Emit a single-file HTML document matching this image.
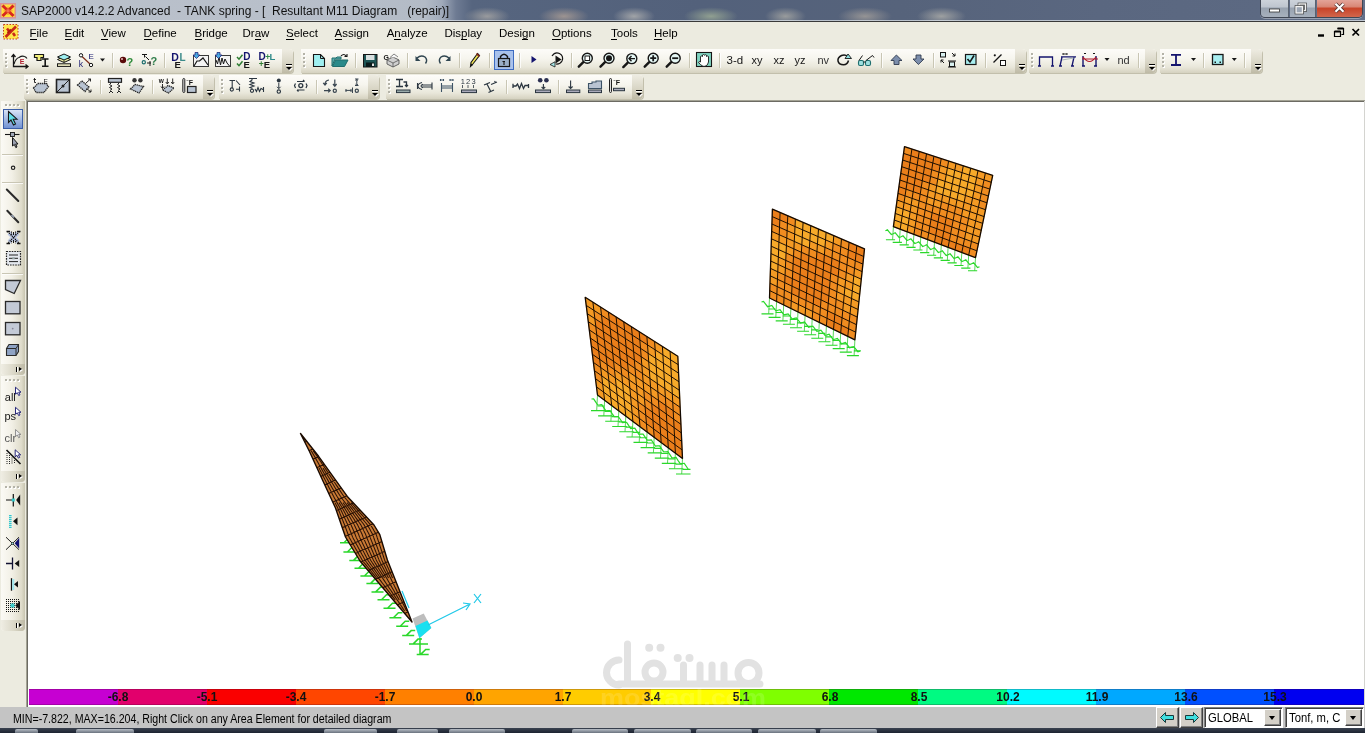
<!DOCTYPE html><html><head><meta charset="utf-8"><style>
*{margin:0;padding:0;box-sizing:border-box}
html,body{width:1365px;height:733px;overflow:hidden;will-change:transform;background:#ECEBE0;font-family:"Liberation Sans",sans-serif;position:relative}
.a{position:absolute}
.t{position:absolute;white-space:nowrap;line-height:1}
svg{position:absolute;overflow:visible}
.tb{position:absolute;border-radius:0 4px 4px 0;background:linear-gradient(#FDFCF9 0%,#F6F5EE 40%,#E9E7DA 75%,#D5D2C0 100%);box-shadow:1px 1px 0 #C2BFAC}
.m{position:absolute;font-size:11.5px;color:#000;line-height:1;white-space:nowrap}
.m u{text-decoration:none;border-bottom:1px solid #000}
</style></head><body>
<div class="a" style="left:0;top:0;width:1365px;height:21px;background:linear-gradient(90deg,#BAC1CB 0px,#B8BFCA 300px,#B3BBC6 425px,#A0AABA 442px,#6E7B93 456px,#56657F 472px,#53617B 700px,#56637B 900px,#5A6780 1100px,#5C6982 1260px,#64708A 1365px)"></div>
<div class="a" style="left:460px;top:2px;width:54px;height:19px;background:radial-gradient(ellipse 23.0px 9px at 50% 75%,rgba(170,168,165,0.8),rgba(170,168,165,0) 100%)"></div>
<div class="a" style="left:535px;top:2px;width:58px;height:19px;background:radial-gradient(ellipse 25.0px 9px at 50% 75%,rgba(175,160,150,0.8),rgba(175,160,150,0) 100%)"></div>
<div class="a" style="left:609px;top:2px;width:50px;height:19px;background:radial-gradient(ellipse 21.0px 9px at 50% 75%,rgba(180,180,178,0.8),rgba(180,180,178,0) 100%)"></div>
<div class="a" style="left:680px;top:2px;width:62px;height:19px;background:radial-gradient(ellipse 27.0px 9px at 50% 75%,rgba(160,175,150,0.8),rgba(160,175,150,0) 100%)"></div>
<div class="a" style="left:761px;top:2px;width:49px;height:19px;background:radial-gradient(ellipse 20.5px 9px at 50% 75%,rgba(170,170,165,0.8),rgba(170,170,165,0) 100%)"></div>
<div class="a" style="left:834px;top:2px;width:62px;height:19px;background:radial-gradient(ellipse 27.0px 9px at 50% 75%,rgba(165,160,155,0.8),rgba(165,160,155,0) 100%)"></div>
<div class="a" style="left:913px;top:2px;width:57px;height:19px;background:radial-gradient(ellipse 24.5px 9px at 50% 75%,rgba(175,175,170,0.8),rgba(175,175,170,0) 100%)"></div>
<div class="a" style="left:0;top:20px;width:1365px;height:1px;background:rgba(230,235,240,0.7)"></div>
<div class="a" style="left:0;top:21px;width:1365px;height:1px;background:#3A3A3A"></div>
<div class="t" style="left:21px;top:5px;font-size:12px;color:#111">SAP2000 v14.2.2 Advanced&nbsp; - TANK spring - [&nbsp; Resultant M11 Diagram &nbsp; (repair)]</div>
<div class="a" style="left:1260px;top:-3px;width:103px;height:21px;border-radius:0 0 5px 5px;border:1px solid #3F4654;border-top:none;overflow:hidden;box-shadow:0 1px 0 rgba(255,255,255,0.35)">
<div class="a" style="left:0;top:0;width:28px;height:21px;background:linear-gradient(#D3D8DF 0%,#BEC5CF 48%,#98A2B0 52%,#A9B2BE 100%);border-right:1px solid #5A6270"></div>
<div class="a" style="left:29px;top:0;width:26px;height:21px;background:linear-gradient(#D3D8DF 0%,#BEC5CF 48%,#98A2B0 52%,#A9B2BE 100%);border-right:1px solid #5A6270"></div>
<div class="a" style="left:56px;top:0;width:47px;height:21px;background:linear-gradient(#E8B0A8 0%,#D98878 45%,#C8442A 55%,#D26A50 100%)"></div>
</div>
<svg width="110" height="22" style="left:1260px;top:0">
<rect x="9.5" y="9" width="10" height="3" fill="#fff" stroke="#333" stroke-width="0.8"/>
<rect x="39" y="4" width="6.5" height="6.5" fill="none" stroke="#333" stroke-width="2.6"/><rect x="39" y="4" width="6.5" height="6.5" fill="none" stroke="#F2F2F2" stroke-width="1.4"/>
<rect x="36" y="6.5" width="6.5" height="6.5" fill="#9CA6B4" stroke="#333" stroke-width="2.6"/><rect x="36" y="6.5" width="6.5" height="6.5" fill="#9CA6B4" stroke="#F2F2F2" stroke-width="1.4"/>
<path d="M75.5 3.8L83.5 11.8M83.5 3.8L75.5 11.8" stroke="#4A2A2A" stroke-width="3.6"/><path d="M75.5 3.8L83.5 11.8M83.5 3.8L75.5 11.8" stroke="#fff" stroke-width="2.2"/>
</svg>
<svg width="60" height="20" style="left:1310px;top:24px">
<rect x="8" y="10.3" width="6" height="2.4" fill="#000"/>
<path d="M27.5 4.5H33.5V10.5H31.5M24.5 7.5H30.5V12.5H24.5Z" fill="none" stroke="#000" stroke-width="1.2"/><path d="M27.5 4.5H33.5M24.5 7.5H30.5" stroke="#000" stroke-width="2"/>
<path d="M42.5 5L49 11.5M49 5L42.5 11.5" stroke="#000" stroke-width="1.7"/>
</svg>
<div class="m" style="left:29.5px;top:28px"><u>F</u>ile</div>
<div class="m" style="left:64.5px;top:28px"><u>E</u>dit</div>
<div class="m" style="left:101px;top:28px"><u>V</u>iew</div>
<div class="m" style="left:143.5px;top:28px"><u>D</u>efine</div>
<div class="m" style="left:194.5px;top:28px"><u>B</u>ridge</div>
<div class="m" style="left:242.5px;top:28px">Dr<u>a</u>w</div>
<div class="m" style="left:286px;top:28px"><u>S</u>elect</div>
<div class="m" style="left:334.5px;top:28px"><u>A</u>ssign</div>
<div class="m" style="left:386.7px;top:28px">A<u>n</u>alyze</div>
<div class="m" style="left:444.4px;top:28px">Dis<u>p</u>lay</div>
<div class="m" style="left:499px;top:28px">Desi<u>g</u>n</div>
<div class="m" style="left:552px;top:28px"><u>O</u>ptions</div>
<div class="m" style="left:611px;top:28px"><u>T</u>ools</div>
<div class="m" style="left:654px;top:28px"><u>H</u>elp</div>
<svg width="30" height="45" style="left:0;top:0">
<rect x="0" y="3" width="16" height="15.5" fill="#F07070" opacity="0.55"/>
<rect x="1.5" y="4.5" width="13" height="12.5" fill="#FFE23A"/>
<path d="M2.5 5.5L13.5 16M13.5 5.5L2.5 16" stroke="#D8281E" stroke-width="3"/>
<path d="M8 6.5V15M3.5 10.8H12.5" stroke="#F06030" stroke-width="1.2" opacity="0.6"/>
<rect x="6.5" y="9.3" width="3" height="3" fill="#F47050"/>
<rect x="3.5" y="24.5" width="14.5" height="14.5" fill="#FFE84A" stroke="#C83A20" stroke-width="1" stroke-dasharray="1.5 1.5"/>
<path d="M5.5 37L16 26.5M7 28.5L9 31M13 33L15 36" stroke="#C82818" stroke-width="2.6"/>
<path d="M7.5 33L11 29.5" stroke="#B01810" stroke-width="2"/>
</svg>
<div class="tb" style="left:3px;top:49px;width:290px;height:24px"></div>
<div class="a" style="left:5px;top:53px;width:2px;height:2px;background:#B4B3A8;box-shadow:1px 1px 0 #fff"></div>
<div class="a" style="left:5px;top:57px;width:2px;height:2px;background:#B4B3A8;box-shadow:1px 1px 0 #fff"></div>
<div class="a" style="left:5px;top:61px;width:2px;height:2px;background:#B4B3A8;box-shadow:1px 1px 0 #fff"></div>
<div class="a" style="left:5px;top:65px;width:2px;height:2px;background:#B4B3A8;box-shadow:1px 1px 0 #fff"></div>
<div class="a" style="left:282px;top:49px;width:11px;height:24px;border-radius:0 4px 4px 0;background:linear-gradient(#EEECE2 0%,#D9D6C6 55%,#BEBAA6 100%)"></div>
<div class="a" style="left:285.5px;top:64px;width:6px;height:1px;background:#000;box-shadow:0 1px 0 #fff"></div>
<div class="a" style="left:285.5px;top:67px;width:0;height:0;border-left:3px solid transparent;border-right:3px solid transparent;border-top:3.5px solid #000;filter:drop-shadow(1px 1px 0 #fff)"></div>
<div class="tb" style="left:301px;top:49px;width:725px;height:24px"></div>
<div class="a" style="left:303px;top:53px;width:2px;height:2px;background:#B4B3A8;box-shadow:1px 1px 0 #fff"></div>
<div class="a" style="left:303px;top:57px;width:2px;height:2px;background:#B4B3A8;box-shadow:1px 1px 0 #fff"></div>
<div class="a" style="left:303px;top:61px;width:2px;height:2px;background:#B4B3A8;box-shadow:1px 1px 0 #fff"></div>
<div class="a" style="left:303px;top:65px;width:2px;height:2px;background:#B4B3A8;box-shadow:1px 1px 0 #fff"></div>
<div class="a" style="left:1015px;top:49px;width:11px;height:24px;border-radius:0 4px 4px 0;background:linear-gradient(#EEECE2 0%,#D9D6C6 55%,#BEBAA6 100%)"></div>
<div class="a" style="left:1018.5px;top:64px;width:6px;height:1px;background:#000;box-shadow:0 1px 0 #fff"></div>
<div class="a" style="left:1018.5px;top:67px;width:0;height:0;border-left:3px solid transparent;border-right:3px solid transparent;border-top:3.5px solid #000;filter:drop-shadow(1px 1px 0 #fff)"></div>
<div class="tb" style="left:1029px;top:49px;width:127px;height:24px"></div>
<div class="a" style="left:1031px;top:53px;width:2px;height:2px;background:#B4B3A8;box-shadow:1px 1px 0 #fff"></div>
<div class="a" style="left:1031px;top:57px;width:2px;height:2px;background:#B4B3A8;box-shadow:1px 1px 0 #fff"></div>
<div class="a" style="left:1031px;top:61px;width:2px;height:2px;background:#B4B3A8;box-shadow:1px 1px 0 #fff"></div>
<div class="a" style="left:1031px;top:65px;width:2px;height:2px;background:#B4B3A8;box-shadow:1px 1px 0 #fff"></div>
<div class="a" style="left:1145px;top:49px;width:11px;height:24px;border-radius:0 4px 4px 0;background:linear-gradient(#EEECE2 0%,#D9D6C6 55%,#BEBAA6 100%)"></div>
<div class="a" style="left:1148.5px;top:64px;width:6px;height:1px;background:#000;box-shadow:0 1px 0 #fff"></div>
<div class="a" style="left:1148.5px;top:67px;width:0;height:0;border-left:3px solid transparent;border-right:3px solid transparent;border-top:3.5px solid #000;filter:drop-shadow(1px 1px 0 #fff)"></div>
<div class="tb" style="left:1160px;top:49px;width:102px;height:24px"></div>
<div class="a" style="left:1162px;top:53px;width:2px;height:2px;background:#B4B3A8;box-shadow:1px 1px 0 #fff"></div>
<div class="a" style="left:1162px;top:57px;width:2px;height:2px;background:#B4B3A8;box-shadow:1px 1px 0 #fff"></div>
<div class="a" style="left:1162px;top:61px;width:2px;height:2px;background:#B4B3A8;box-shadow:1px 1px 0 #fff"></div>
<div class="a" style="left:1162px;top:65px;width:2px;height:2px;background:#B4B3A8;box-shadow:1px 1px 0 #fff"></div>
<div class="a" style="left:1251px;top:49px;width:11px;height:24px;border-radius:0 4px 4px 0;background:linear-gradient(#EEECE2 0%,#D9D6C6 55%,#BEBAA6 100%)"></div>
<div class="a" style="left:1254.5px;top:64px;width:6px;height:1px;background:#000;box-shadow:0 1px 0 #fff"></div>
<div class="a" style="left:1254.5px;top:67px;width:0;height:0;border-left:3px solid transparent;border-right:3px solid transparent;border-top:3.5px solid #000;filter:drop-shadow(1px 1px 0 #fff)"></div>
<div class="tb" style="left:24px;top:75px;width:190px;height:24px"></div>
<div class="a" style="left:26px;top:79px;width:2px;height:2px;background:#B4B3A8;box-shadow:1px 1px 0 #fff"></div>
<div class="a" style="left:26px;top:83px;width:2px;height:2px;background:#B4B3A8;box-shadow:1px 1px 0 #fff"></div>
<div class="a" style="left:26px;top:87px;width:2px;height:2px;background:#B4B3A8;box-shadow:1px 1px 0 #fff"></div>
<div class="a" style="left:26px;top:91px;width:2px;height:2px;background:#B4B3A8;box-shadow:1px 1px 0 #fff"></div>
<div class="a" style="left:203px;top:75px;width:11px;height:24px;border-radius:0 4px 4px 0;background:linear-gradient(#EEECE2 0%,#D9D6C6 55%,#BEBAA6 100%)"></div>
<div class="a" style="left:206.5px;top:90px;width:6px;height:1px;background:#000;box-shadow:0 1px 0 #fff"></div>
<div class="a" style="left:206.5px;top:93px;width:0;height:0;border-left:3px solid transparent;border-right:3px solid transparent;border-top:3.5px solid #000;filter:drop-shadow(1px 1px 0 #fff)"></div>
<div class="tb" style="left:219px;top:75px;width:160px;height:24px"></div>
<div class="a" style="left:221px;top:79px;width:2px;height:2px;background:#B4B3A8;box-shadow:1px 1px 0 #fff"></div>
<div class="a" style="left:221px;top:83px;width:2px;height:2px;background:#B4B3A8;box-shadow:1px 1px 0 #fff"></div>
<div class="a" style="left:221px;top:87px;width:2px;height:2px;background:#B4B3A8;box-shadow:1px 1px 0 #fff"></div>
<div class="a" style="left:221px;top:91px;width:2px;height:2px;background:#B4B3A8;box-shadow:1px 1px 0 #fff"></div>
<div class="a" style="left:368px;top:75px;width:11px;height:24px;border-radius:0 4px 4px 0;background:linear-gradient(#EEECE2 0%,#D9D6C6 55%,#BEBAA6 100%)"></div>
<div class="a" style="left:371.5px;top:90px;width:6px;height:1px;background:#000;box-shadow:0 1px 0 #fff"></div>
<div class="a" style="left:371.5px;top:93px;width:0;height:0;border-left:3px solid transparent;border-right:3px solid transparent;border-top:3.5px solid #000;filter:drop-shadow(1px 1px 0 #fff)"></div>
<div class="tb" style="left:386px;top:75px;width:257px;height:24px"></div>
<div class="a" style="left:388px;top:79px;width:2px;height:2px;background:#B4B3A8;box-shadow:1px 1px 0 #fff"></div>
<div class="a" style="left:388px;top:83px;width:2px;height:2px;background:#B4B3A8;box-shadow:1px 1px 0 #fff"></div>
<div class="a" style="left:388px;top:87px;width:2px;height:2px;background:#B4B3A8;box-shadow:1px 1px 0 #fff"></div>
<div class="a" style="left:388px;top:91px;width:2px;height:2px;background:#B4B3A8;box-shadow:1px 1px 0 #fff"></div>
<div class="a" style="left:632px;top:75px;width:11px;height:24px;border-radius:0 4px 4px 0;background:linear-gradient(#EEECE2 0%,#D9D6C6 55%,#BEBAA6 100%)"></div>
<div class="a" style="left:635.5px;top:90px;width:6px;height:1px;background:#000;box-shadow:0 1px 0 #fff"></div>
<div class="a" style="left:635.5px;top:93px;width:0;height:0;border-left:3px solid transparent;border-right:3px solid transparent;border-top:3.5px solid #000;filter:drop-shadow(1px 1px 0 #fff)"></div>
<svg width="1365" height="110" style="left:0;top:0"><path d="M13.5 55V66.5H27.5M11.5 57L13.5 54.5L15.5 57M25.5 64.5L28 66.5L25.5 68.5" stroke="#161616" stroke-width="1.3" fill="none"/>
<path d="M14 64Q16 58 19 57.5Q22 55.5 24.5 56.5Q26 57 27 58.5" stroke="#161616" stroke-width="1.1" fill="none"/>
<text x="19.8" y="64.2" font-family='"Liberation Sans",sans-serif' font-size="7" fill="#B02030" font-weight="bold" >E</text>
<path d="M34.5 54.5H43.5V57.5H41V60.5H37V57.5H34.5Z" fill="#F4F07A" stroke="#161616" stroke-width="1.2"/>
<path d="M42 59H48.5M45.2 59V66M42 66.2H48.5" stroke="#161616" stroke-width="1.6" fill="none"/>
<path d="M57.5 59.5L64 56.5L70.5 59.5L64 62.5Z" fill="#E8E8A0" stroke="#161616" stroke-width="1"/>
<path d="M57.5 57L64 54L70.5 57L64 60Z" fill="#9FEFF0" stroke="#161616" stroke-width="1"/>
<path d="M64 60.5V62" stroke="#161616"/><rect x="57.5" y="63.8" width="13" height="2.6" fill="#F2F0C8" stroke="#161616" stroke-width="1"/>
<path d="M82 56.5L90 64" stroke="#7A2A1A" stroke-width="1.2"/><circle cx="81" cy="55.3" r="1.7" fill="#fff" stroke="#161616"/><circle cx="91" cy="65" r="1.7" fill="#fff" stroke="#161616"/>
<text x="88.6" y="58.9" font-family='"Liberation Sans",sans-serif' font-size="8" fill="#14146E" font-weight="normal" >E</text>
<text x="78.8" y="66.6" font-family='"Liberation Sans",sans-serif' font-size="8.5" fill="#14146E" font-weight="normal" >k</text>
<path d="M100 58.4h5l-2.5 3z" fill="#161616"/>
<path d="M112.5 53V68" stroke="#C9C6B4" stroke-width="1"/><path d="M113.5 53V68" stroke="#FFFFFF" stroke-width="1" opacity="0.8"/>
<circle cx="123" cy="60" r="3.2" fill="#5A0A0A"/><circle cx="122" cy="59" r="1" fill="#E8C0C0"/>
<text x="126.5" y="65.5" font-family='"Liberation Sans",sans-serif' font-size="11" fill="#2E8B3A" font-weight="bold" >?</text>
<path d="M142 54.5H147M144.5 54.5V57.5M145.5 56.5L149 60M147 63H151M150 61V66" stroke="#161616" stroke-width="1" fill="none"/><circle cx="143.8" cy="62.2" r="1.6" fill="none" stroke="#1E6E6E" stroke-width="1.2"/>
<text x="150.5" y="64.5" font-family='"Liberation Sans",sans-serif' font-size="11" fill="#2E7D4A" font-weight="bold" >?</text>
<path d="M164.5 53V68" stroke="#C9C6B4" stroke-width="1"/><path d="M165.5 53V68" stroke="#FFFFFF" stroke-width="1" opacity="0.8"/>
<text x="171.2" y="60.6" font-family='"Liberation Sans",sans-serif' font-size="10.5" fill="#14146E" font-weight="bold" >D</text>
<text x="179.6" y="60.6" font-family='"Liberation Sans",sans-serif' font-size="10" fill="#3A8A8A" font-weight="bold" >L</text>
<text x="174.6" y="67.6" font-family='"Liberation Sans",sans-serif' font-size="9.5" fill="#161616" font-weight="bold" >E</text>
<rect x="193.5" y="55.5" width="15" height="11" fill="#F4F4F4" stroke="#3A3A3A" stroke-width="1"/>
<path d="M194 66L197 61H199.5L203 58L208 65" stroke="#161616" stroke-width="1.2" fill="none"/>
<path d="M195 52.5H198V55H200L196.5 58.5L193 55H195Z" fill="#4AA8E0" stroke="#14146E" stroke-width="0.7"/>
<rect x="215.5" y="55.5" width="15" height="11" fill="#F4F4F4" stroke="#3A3A3A" stroke-width="1"/>
<path d="M216 60L217.5 64L219 57L220.5 65L222 58L223.5 64L225 59L227 63L229.5 66" stroke="#161616" stroke-width="1" fill="none"/>
<path d="M217 52.5H220V55H222L218.5 58.5L215 55H217Z" fill="#4AA8E0" stroke="#14146E" stroke-width="0.7"/>
<path d="M237 57L239 59.2L242.5 54.8M237 63.5L239 65.7L242.5 61.3" stroke="#2E7D32" stroke-width="1.5" fill="none"/>
<text x="243.3" y="60.4" font-family='"Liberation Sans",sans-serif' font-size="10" fill="#14146E" font-weight="bold" >D</text>
<text x="243.5" y="67.6" font-family='"Liberation Sans",sans-serif' font-size="9.5" fill="#161616" font-weight="bold" >E</text>
<text x="258.6" y="60.4" font-family='"Liberation Sans",sans-serif' font-size="10" fill="#14146E" font-weight="bold" >D</text>
<text x="265.3" y="60.4" font-family='"Liberation Sans",sans-serif' font-size="8.5" fill="#2E8A4A" font-weight="bold" >+</text>
<text x="269.5" y="60.4" font-family='"Liberation Sans",sans-serif' font-size="9.5" fill="#2E8A8A" font-weight="bold" >L</text>
<text x="258.8" y="66.8" font-family='"Liberation Sans",sans-serif' font-size="8.5" fill="#2E7D32" font-weight="bold" >+</text>
<text x="263.8" y="67.6" font-family='"Liberation Sans",sans-serif' font-size="9.5" fill="#161616" font-weight="bold" >E</text><path d="M313.5 54.5H320.5L324.5 58.5V66.5H313.5Z" fill="#9FEFF0" stroke="#161616" stroke-width="1.1"/><path d="M320.5 54.5V58.5H324.5" fill="none" stroke="#161616"/>
<path d="M332 58H336L337 57H341V59H335L332 66Z" fill="#5FB0B0" stroke="#1E6E6E" stroke-width="1"/><path d="M332.5 66.5L335.5 60H348L344.5 66.5Z" fill="#2A8A8A" stroke="#1E6E6E" stroke-width="1"/>
<path d="M341 56Q344 53 346 56M344.5 56.5H347V54" stroke="#161616" stroke-width="1.1" fill="none"/>
<path d="M355.5 53V68" stroke="#C9C6B4" stroke-width="1"/><path d="M356.5 53V68" stroke="#FFFFFF" stroke-width="1" opacity="0.8"/>
<rect x="363.5" y="54.5" width="13.5" height="12.5" fill="#1E5555" stroke="#161616" stroke-width="1"/><rect x="366" y="55" width="8.5" height="5" fill="#D8E0E0"/><rect x="366" y="62.5" width="8.5" height="4.5" fill="#0A1A1A"/><rect x="372" y="63.5" width="2" height="2.5" fill="#E0E0E0"/>
<text x="383.5" y="59.5" font-family='"Liberation Sans",sans-serif' font-size="7" fill="#161616" font-weight="bold" >G</text>
<path d="M387 60L393 57L399 60L399 64L393 67L387 64Z" fill="#D0D0D0" stroke="#555" stroke-width="0.9"/><path d="M387 60L393 63L399 60M393 63V67" stroke="#555" stroke-width="0.8" fill="none"/><path d="M390 57.5L394 54L398 57" fill="#F8F8F8" stroke="#666" stroke-width="0.8"/>
<path d="M407.5 53V68" stroke="#C9C6B4" stroke-width="1"/><path d="M408.5 53V68" stroke="#FFFFFF" stroke-width="1" opacity="0.8"/>
<path d="M417 58Q421 54.5 425 57Q428 60 425.5 63.5" stroke="#2F4550" stroke-width="1.4" fill="none"/><path d="M415.5 56V61H420.5Z" fill="#2F4550"/>
<path d="M449 58Q445 54.5 441 57Q438 60 440.5 63.5" stroke="#2F4550" stroke-width="1.4" fill="none"/><path d="M450.5 56V61H445.5Z" fill="#2F4550"/>
<path d="M459.5 53V68" stroke="#C9C6B4" stroke-width="1"/><path d="M460.5 53V68" stroke="#FFFFFF" stroke-width="1" opacity="0.8"/>
<path d="M477.5 53.5L479.5 55.5L472.5 64.5L470.5 66.5L471 62.5Z" fill="#F4E85A" stroke="#161616" stroke-width="1.1"/><path d="M477 53L479.8 55.8L478.8 57L476 54.2Z" fill="#8A2A1A"/><path d="M470.3 66.8L471 63.5L473 65Z" fill="#161616"/>
<path d="M489.5 53V68" stroke="#C9C6B4" stroke-width="1"/><path d="M490.5 53V68" stroke="#FFFFFF" stroke-width="1" opacity="0.8"/>
<rect x="494.5" y="50.5" width="19" height="19" fill="#A9C2EC" stroke="#3D6BC0" stroke-width="1"/>
<path d="M500.5 58.5V56.5Q504 52 507.5 56.5V58.5" stroke="#161616" stroke-width="1.4" fill="none"/><rect x="498.5" y="58.5" width="11" height="8" fill="#9AAFC8" stroke="#161616" stroke-width="1.2"/><path d="M504 61V65M502.5 61.5H505" stroke="#161616" stroke-width="1.1"/>
<path d="M519.5 53V68" stroke="#C9C6B4" stroke-width="1"/><path d="M520.5 53V68" stroke="#FFFFFF" stroke-width="1" opacity="0.8"/>
<path d="M531.5 56L536.5 59.5L531.5 63Z" fill="#14146E"/>
<path d="M552 56Q555 51.5 559.5 53.5Q564 56 562 61Q560 64.5 556 64" stroke="#161616" stroke-width="1.2" fill="none"/><path d="M555.5 55.5L561.5 59.5L555.5 63.5Z" fill="#161616"/><path d="M550 64.5L555 61.8V67Z" fill="#A8E8E8" stroke="#161616" stroke-width="0.8"/>
<path d="M571.5 53V68" stroke="#C9C6B4" stroke-width="1"/><path d="M572.5 53V68" stroke="#FFFFFF" stroke-width="1" opacity="0.8"/>
<path d="M583.3 62.2L578.8 66.7" stroke="#161616" stroke-width="2.4" stroke-linecap="round"/><circle cx="587.3" cy="58.2" r="5" fill="#E6F8F6" stroke="#161616" stroke-width="1.4"/><rect x="585" y="56" width="4.6" height="4.5" fill="#fff" stroke="#161616" stroke-width="1"/>
<path d="M605 62.2L600.5 66.7" stroke="#161616" stroke-width="2.4" stroke-linecap="round"/><circle cx="609" cy="58.2" r="5" fill="#E6F8F6" stroke="#161616" stroke-width="1.4"/><circle cx="609" cy="58.2" r="3" fill="#161616"/>
<path d="M627.8 62.6L623.3 67.1" stroke="#161616" stroke-width="2.4" stroke-linecap="round"/><circle cx="631.8" cy="58.6" r="5" fill="#E6F8F6" stroke="#161616" stroke-width="1.4"/><path d="M635 58.6H629M631.5 56L629 58.6L631.5 61.2" stroke="#161616" stroke-width="1.4" fill="none"/>
<path d="M649.2 62.2L644.7 66.7" stroke="#161616" stroke-width="2.4" stroke-linecap="round"/><circle cx="653.2" cy="58.2" r="5" fill="#E6F8F6" stroke="#161616" stroke-width="1.4"/><path d="M650.2 58.2H656.2M653.2 55.2V61.2" stroke="#161616" stroke-width="1.8"/>
<path d="M671.2 62.2L666.7 66.7" stroke="#161616" stroke-width="2.4" stroke-linecap="round"/><circle cx="675.2" cy="58.2" r="5" fill="#E6F8F6" stroke="#161616" stroke-width="1.4"/><path d="M672.2 58.2H678.2" stroke="#161616" stroke-width="1.8"/>
<path d="M689.5 53V68" stroke="#C9C6B4" stroke-width="1"/><path d="M690.5 53V68" stroke="#FFFFFF" stroke-width="1" opacity="0.8"/>
<rect x="696.5" y="52.5" width="15" height="14" fill="#7FD3C0" stroke="#161616" stroke-width="1.1"/>
<path d="M700.5 62V56.5Q701.5 55.5 702.5 56.5V55Q703.5 54 704.5 55V55.2Q705.5 54.2 706.5 55.2V56.5Q707.5 55.5 708.5 56.5V62Q708 65.5 705 66.3H703Q700.5 65 698.5 62.5Q698.5 61 700.5 62Z" fill="#fff" stroke="#161616" stroke-width="0.9"/>
<path d="M719.5 53V68" stroke="#C9C6B4" stroke-width="1"/><path d="M720.5 53V68" stroke="#FFFFFF" stroke-width="1" opacity="0.8"/>
<text x="726.5" y="63.7" font-family='"Liberation Sans",sans-serif' font-size="11.5" fill="#161616" font-weight="normal" >3-d</text>
<text x="751.5" y="63.7" font-family='"Liberation Sans",sans-serif' font-size="11" fill="#161616" font-weight="normal" >xy</text>
<text x="773.5" y="63.7" font-family='"Liberation Sans",sans-serif' font-size="11" fill="#161616" font-weight="normal" >xz</text>
<text x="794.5" y="63.7" font-family='"Liberation Sans",sans-serif' font-size="11" fill="#161616" font-weight="normal" >yz</text>
<text x="817.5" y="63.7" font-family='"Liberation Sans",sans-serif' font-size="11" fill="#333" font-weight="normal" >nv</text>
<path d="M848 56.5Q845 54 841.5 55.5Q837.5 57.5 838 61Q839 64.8 843.5 64.8Q847.5 64.5 848.5 60.5" stroke="#161616" stroke-width="1.5" fill="none"/><path d="M845 58.5L848 54L851.5 58.5Z" fill="#8FE0E0" stroke="#161616" stroke-width="0.9"/>
<rect x="858.5" y="60.5" width="5" height="5" rx="1.5" fill="#9FE0E0" stroke="#1E6E6E" stroke-width="1.1"/><rect x="865.5" y="60.5" width="5" height="5" rx="1.5" fill="#9FE0E0" stroke="#1E6E6E" stroke-width="1.1"/><path d="M863.5 62H865.5M859 60.5L862.5 55.5M866 60.5L872.5 55.5L874 57.5" stroke="#161616" stroke-width="1" fill="none"/>
<path d="M881.5 53V68" stroke="#C9C6B4" stroke-width="1"/><path d="M882.5 53V68" stroke="#FFFFFF" stroke-width="1" opacity="0.8"/>
<path d="M896.4 55L902 60.5H899V64.5H894V60.5H891Z" fill="#7C8EAC" stroke="#2F3A4F" stroke-width="0.9"/>
<path d="M918.4 64.5L924 59H921V55H916V59H913Z" fill="#7C8EAC" stroke="#2F3A4F" stroke-width="0.9"/>
<path d="M933.5 53V68" stroke="#C9C6B4" stroke-width="1"/><path d="M934.5 53V68" stroke="#FFFFFF" stroke-width="1" opacity="0.8"/>
<rect x="940.5" y="52.5" width="5" height="4.5" fill="#D8F0F0" stroke="#161616" stroke-width="1"/><rect x="949.5" y="62" width="5" height="4.5" fill="#D8F0F0" stroke="#161616" stroke-width="1"/><path d="M952 53L955 56M955 53.5V56H952.5M944 63L941 60M941 62.5V60H943.5M948 61H956M948 67H956" stroke="#161616" stroke-width="1" fill="none"/>
<rect x="965.5" y="54.5" width="10.5" height="10" fill="#A8EEF0" stroke="#161616" stroke-width="1.2"/><path d="M967.5 59L970 62L974 55.5" stroke="#161616" stroke-width="1.6" fill="none"/>
<path d="M985.5 53V68" stroke="#C9C6B4" stroke-width="1"/><path d="M986.5 53V68" stroke="#FFFFFF" stroke-width="1" opacity="0.8"/>
<circle cx="994.8" cy="55.3" r="1.1" fill="#161616"/><path d="M993.5 62.5L1001.5 54.5" stroke="#161616" stroke-width="1.3"/><rect x="1000.5" y="60.5" width="5" height="5" fill="#fff" stroke="#161616" stroke-width="1"/><path d="M1039.5 66V57H1052.5V66M1038 66H1041M1051 66H1054" stroke="#14146E" stroke-width="1.3" fill="none"/>
<path d="M1061 56.8H1076M1062 57L1060 66M1074 57L1072 66M1059 66H1062M1071 66H1074" stroke="#14146E" stroke-width="1.3" fill="none"/><path d="M1063 53V55M1067 53V55M1063 54H1067" stroke="#161616" stroke-width="0.9"/><path d="M1062 60L1074 58" stroke="#9AA" stroke-width="0.8"/>
<path d="M1083 56V66M1096 56V66M1082 66H1085M1094 66H1097" stroke="#14146E" stroke-width="1.4" fill="none"/><path d="M1082 59H1098M1083 57Q1089.5 66 1096 57" stroke="#B01828" stroke-width="1.2" fill="none"/><path d="M1084 53.5H1086M1093 53.5H1095" stroke="#161616"/>
<path d="M1104.5 57.9h5l-2.5 3z" fill="#161616"/>
<text x="1117.5" y="63.8" font-family='"Liberation Sans",sans-serif' font-size="11" fill="#333" font-weight="normal" >nd</text>
<path d="M1138.5 53V68" stroke="#C9C6B4" stroke-width="1"/><path d="M1139.5 53V68" stroke="#FFFFFF" stroke-width="1" opacity="0.8"/>
<path d="M1171 54.8H1181M1176 54.8V65M1171 65H1181" stroke="#14146E" stroke-width="1.8" fill="none"/>
<path d="M1191 57.9h5l-2.5 3z" fill="#161616"/>
<path d="M1203.5 53V68" stroke="#C9C6B4" stroke-width="1"/><path d="M1204.5 53V68" stroke="#FFFFFF" stroke-width="1" opacity="0.8"/>
<rect x="1212.5" y="54.5" width="10.5" height="10" fill="#A8EEF0" stroke="#161616" stroke-width="1.3"/><rect x="1214.5" y="61.5" width="1.5" height="1.5" fill="#161616"/><rect x="1219.5" y="61.5" width="1.5" height="1.5" fill="#161616"/>
<path d="M1231.8 57.9h5l-2.5 3z" fill="#161616"/>
<path d="M1244.5 53V68" stroke="#C9C6B4" stroke-width="1"/><path d="M1245.5 53V68" stroke="#FFFFFF" stroke-width="1" opacity="0.8"/><path d="M33.5 88L38 83.5L46 83.5L48.5 86.5L44 92.5L36 92.5Z" fill="#B9C4D2" stroke="#222" stroke-width="1.3" stroke-dasharray="1.3 0.7"/>
<path d="M34.5 78V82.5H36M33.5 79.5H36" stroke="#161616" stroke-width="0.9" fill="none"/>
<text x="43.5" y="83.6" font-family='"Liberation Sans",sans-serif' font-size="6.5" fill="#161616" font-weight="normal" >E</text>
<rect x="56.5" y="79.5" width="13" height="13" fill="#B9C4D2" stroke="#222" stroke-width="1.6"/><path d="M57 92L69 80" stroke="#222" stroke-width="1"/><circle cx="63" cy="86" r="1.5" fill="#222"/>
<path d="M77.5 85L82 81L89 87L85 91.5Z" fill="#B9C4D2" stroke="#222" stroke-width="1.3" stroke-dasharray="1.3 0.7"/>
<path d="M86 83L90.5 79M88 79H90.5V81.5M86.5 88.5L91 92M91 89.5V92H88.5" stroke="#161616" stroke-width="0.9" fill="none"/>
<path d="M100.5 80V94" stroke="#C9C6B4" stroke-width="1"/><path d="M101.5 80V94" stroke="#FFFFFF" stroke-width="1" opacity="0.8"/>
<rect x="108.5" y="78.5" width="13" height="3.8" fill="#B9C4D2" stroke="#222" stroke-width="1.2"/><path d="M111 83L109.5 84.5L112 86L109.5 87.5L112 89L110 90.5M119 83L117.5 84.5L120 86L117.5 87.5L120 89L118 90.5M109 93L111 91L113 93M117 93L119 91L121 93" stroke="#222" stroke-width="1" fill="none"/>
<circle cx="134.5" cy="80.3" r="2.2" fill="#333"/><circle cx="140.4" cy="80.3" r="2.2" fill="#333"/>
<path d="M130.5 89L135 84.5L143.5 86.5L139 93Z" fill="#B9C4D2" stroke="#222" stroke-width="1.3" stroke-dasharray="1.3 0.7"/>
<path d="M152.5 80V94" stroke="#C9C6B4" stroke-width="1"/><path d="M153.5 80V94" stroke="#FFFFFF" stroke-width="1" opacity="0.8"/>
<text x="158.7" y="83" font-family='"Liberation Sans",sans-serif' font-size="6.5" fill="#161616" font-weight="bold" >w</text>
<path d="M167.3 78.5V83.5M165.8 82L167.3 84L168.8 82M172.7 78.5V83.5M171.2 82L172.7 84L174.2 82M162.5 84V88M161 86.5L162.5 88.5L164 86.5" stroke="#161616" stroke-width="0.9" fill="none"/>
<path d="M162.5 90L168 85.5L174 88L168.5 93Z" fill="#B9C4D2" stroke="#222" stroke-width="1.3" stroke-dasharray="1.3 0.7"/>
<rect x="182.8" y="78.5" width="2" height="14" rx="1" fill="#ddd" stroke="#222" stroke-width="1"/>
<text x="188.8" y="84.8" font-family='"Liberation Sans",sans-serif' font-size="7" fill="#161616" font-weight="bold" >F</text>
<path d="M186.5 80.5H188.5" stroke="#777" stroke-width="0.8"/><rect x="187.5" y="86.5" width="8.5" height="6" fill="#B9C4D2" stroke="#222" stroke-width="1.2"/>
<path d="M229.5 80.5H235M232.2 80.5V88M236 80.5L240 85M236 89.2H239M239.5 86.5V91.5" stroke="#2B3640" stroke-width="1.1" fill="none"/><circle cx="231.8" cy="89.5" r="1.6" fill="none" stroke="#2B3640" stroke-width="1.1"/>
<path d="M249 78.5H257M252 78.5V80L250 81.5L254 83L250 84.5L254 86L250 87.5L252.5 88.5M255 89L256.5 91.5L258 87.5L259.5 91.5L261 88.5L263 89.5M263.5 87V92" stroke="#2B3640" stroke-width="1.1" fill="none"/><circle cx="252" cy="90.8" r="1.6" fill="none" stroke="#2B3640" stroke-width="1.1"/>
<circle cx="278.8" cy="80.5" r="2" fill="#2B3640"/><path d="M278.8 83V88.5M277 86.8L278.8 88.6L280.6 86.8" stroke="#2B3640" stroke-width="1" fill="none"/><circle cx="278.8" cy="91.6" r="1.7" fill="none" stroke="#2B3640" stroke-width="1.1"/>
<circle cx="300.8" cy="85.6" r="2" fill="none" stroke="#2B3640" stroke-width="1.3"/><path d="M297 81.5H304.5M303 80L304.5 81.5M297 90H304.5M298.5 91.5L297 90M295.5 83.5L294.5 85.6L295.5 88M306 83.5L307 85.6L306 88" stroke="#2B3640" stroke-width="1.2" fill="none"/>
<path d="M316.5 80V94" stroke="#C9C6B4" stroke-width="1"/><path d="M317.5 80V94" stroke="#FFFFFF" stroke-width="1" opacity="0.8"/>
<path d="M329 80Q325 80.5 325 84.5M323.2 82.8L325 85L326.8 82.8M334.8 79.5V86M333 84L334.8 86.2L336.6 84M324 90.6H330M328.2 88.8L330.2 90.6L328.2 92.4" stroke="#3A4650" stroke-width="1.2" fill="none"/><circle cx="334.8" cy="90.8" r="1.6" fill="none" stroke="#3A4650" stroke-width="1.2"/>
<path d="M345.5 90.4H351.5M346 89V92M351 89V92M352.5 87.5V93M355 79H358.5M356.8 79V85.5M355 85.5H358.5M355.5 80.5L356.8 79.5L358 80.5M355.5 84.2L356.8 85.3L358 84.2" stroke="#3A4650" stroke-width="1" fill="none"/><circle cx="356.8" cy="90.8" r="1.6" fill="none" stroke="#3A4650" stroke-width="1.2"/>
<path d="M396 79.5H403M399.5 79.5V86.5M396 86.5H403M403.5 82H406.5V86M405 85L406.5 86.5L408 85" stroke="#2B3640" stroke-width="1.3" fill="none"/><rect x="396.5" y="90" width="13.5" height="2.6" fill="#9AA" stroke="#2B3640" stroke-width="1"/>
<path d="M422 82.5Q418 83.5 418 86Q418 88.5 422 89.5M423 84.2Q421 85 421 86Q421 87 423 87.8M421.5 85H432M421.5 87H432M432 82.5V89.5M417.5 83V89" stroke="#2B3640" stroke-width="1.1" fill="none"/>
<path d="M440.5 79V81M443.5 79V81M440.5 80H443.5M450 79V81M453 79V81M450 80H453M441.5 83V92M452.5 83V92M441.5 86H452.5M441.5 88H452.5" stroke="#3D5366" stroke-width="1.1" fill="none"/>
<text x="460.8" y="84" font-family='"Liberation Sans",sans-serif' font-size="7.5" fill="#2B3640" font-weight="normal" >1</text>
<text x="466" y="84" font-family='"Liberation Sans",sans-serif' font-size="7.5" fill="#2B3640" font-weight="normal" >2</text>
<text x="471.5" y="84" font-family='"Liberation Sans",sans-serif' font-size="7.5" fill="#2B3640" font-weight="normal" >3</text>
<path d="M462.5 85V88M468 85V88M473.5 85V88" stroke="#2B3640" stroke-width="0.8"/><rect x="461.5" y="90" width="15" height="2.6" fill="#AAB" stroke="#2B3640" stroke-width="1"/>
<path d="M484 85L490 82.5M487 84L490.5 91M488.5 92.5L494 90M491 84.5L497 82M494.5 81L496 83" stroke="#2B3640" stroke-width="1.2" fill="none"/>
<path d="M506.5 80V94" stroke="#C9C6B4" stroke-width="1"/><path d="M507.5 80V94" stroke="#FFFFFF" stroke-width="1" opacity="0.8"/>
<path d="M513 83.8V88M513 86H516L517.5 84L519.5 88.5L521.5 83.5L523.5 88.5L525 85.5H528.5M528.5 84V88" stroke="#2B3640" stroke-width="1.3" fill="none"/>
<circle cx="540.2" cy="80.3" r="2.3" fill="#2A2F50"/><circle cx="546.4" cy="80.3" r="2.3" fill="#2A2F50"/><path d="M543.4 84V88.8M541.6 87L543.4 88.8L545.2 87" stroke="#2B3640" stroke-width="1.1" fill="none"/><rect x="535.5" y="90" width="15" height="2.6" fill="#AAB" stroke="#2B3640" stroke-width="1"/>
<path d="M558.5 80V94" stroke="#C9C6B4" stroke-width="1"/><path d="M559.5 80V94" stroke="#FFFFFF" stroke-width="1" opacity="0.8"/>
<path d="M570.6 80.5V88.5M568.6 86.5L570.6 88.5L572.6 86.5" stroke="#2B3640" stroke-width="1.1" fill="none"/><rect x="566.5" y="90" width="13.3" height="2.6" fill="#AAB" stroke="#2B3640" stroke-width="1"/>
<path d="M588.5 88.5V83.5H592V82H596V81H601.5V88.5Z" fill="#B9C4D2" stroke="#3D5366" stroke-width="1.1"/><rect x="588.5" y="90" width="13" height="2.6" fill="#AAB" stroke="#2B3640" stroke-width="1"/>
<rect x="609.5" y="78.5" width="2" height="14" rx="1" fill="#ddd" stroke="#222" stroke-width="1"/>
<text x="615.8" y="84.8" font-family='"Liberation Sans",sans-serif' font-size="7" fill="#161616" font-weight="bold" >F</text>
<path d="M613.5 80.5H615.5" stroke="#777" stroke-width="0.8"/><rect x="613.5" y="88.3" width="11" height="2.4" fill="#AAB" stroke="#2B3640" stroke-width="1"/></svg>
<div class="a" style="left:1px;top:101px;width:24px;height:274px;border-radius:0 0 4px 4px;background:linear-gradient(90deg,#FBFAF5 0%,#F2F0E6 45%,#DFDCCB 85%,#C8C5B0 100%)"></div>
<div class="a" style="left:5px;top:104px;width:2px;height:2px;background:#B4B3A8;box-shadow:1px 1px 0 #fff"></div>
<div class="a" style="left:9px;top:104px;width:2px;height:2px;background:#B4B3A8;box-shadow:1px 1px 0 #fff"></div>
<div class="a" style="left:13px;top:104px;width:2px;height:2px;background:#B4B3A8;box-shadow:1px 1px 0 #fff"></div>
<div class="a" style="left:17px;top:104px;width:2px;height:2px;background:#B4B3A8;box-shadow:1px 1px 0 #fff"></div>
<div class="a" style="left:1px;top:364px;width:24px;height:11px;border-radius:0 0 4px 4px;background:linear-gradient(90deg,#EFEDE3 0%,#DAD7C7 55%,#BDB9A5 100%)"></div>
<div class="a" style="left:16px;top:367px;width:1px;height:5px;background:#000;box-shadow:1px 0 0 #fff"></div>
<div class="a" style="left:19px;top:367px;width:0;height:0;border-top:2.5px solid transparent;border-bottom:2.5px solid transparent;border-left:3px solid #000;filter:drop-shadow(1px 1px 0 #fff)"></div>
<div class="a" style="left:1px;top:376px;width:24px;height:106px;border-radius:0 0 4px 4px;background:linear-gradient(90deg,#FBFAF5 0%,#F2F0E6 45%,#DFDCCB 85%,#C8C5B0 100%)"></div>
<div class="a" style="left:5px;top:379px;width:2px;height:2px;background:#B4B3A8;box-shadow:1px 1px 0 #fff"></div>
<div class="a" style="left:9px;top:379px;width:2px;height:2px;background:#B4B3A8;box-shadow:1px 1px 0 #fff"></div>
<div class="a" style="left:13px;top:379px;width:2px;height:2px;background:#B4B3A8;box-shadow:1px 1px 0 #fff"></div>
<div class="a" style="left:17px;top:379px;width:2px;height:2px;background:#B4B3A8;box-shadow:1px 1px 0 #fff"></div>
<div class="a" style="left:1px;top:471px;width:24px;height:11px;border-radius:0 0 4px 4px;background:linear-gradient(90deg,#EFEDE3 0%,#DAD7C7 55%,#BDB9A5 100%)"></div>
<div class="a" style="left:16px;top:474px;width:1px;height:5px;background:#000;box-shadow:1px 0 0 #fff"></div>
<div class="a" style="left:19px;top:474px;width:0;height:0;border-top:2.5px solid transparent;border-bottom:2.5px solid transparent;border-left:3px solid #000;filter:drop-shadow(1px 1px 0 #fff)"></div>
<div class="a" style="left:1px;top:483px;width:24px;height:148px;border-radius:0 0 4px 4px;background:linear-gradient(90deg,#FBFAF5 0%,#F2F0E6 45%,#DFDCCB 85%,#C8C5B0 100%)"></div>
<div class="a" style="left:5px;top:486px;width:2px;height:2px;background:#B4B3A8;box-shadow:1px 1px 0 #fff"></div>
<div class="a" style="left:9px;top:486px;width:2px;height:2px;background:#B4B3A8;box-shadow:1px 1px 0 #fff"></div>
<div class="a" style="left:13px;top:486px;width:2px;height:2px;background:#B4B3A8;box-shadow:1px 1px 0 #fff"></div>
<div class="a" style="left:17px;top:486px;width:2px;height:2px;background:#B4B3A8;box-shadow:1px 1px 0 #fff"></div>
<div class="a" style="left:1px;top:620px;width:24px;height:11px;border-radius:0 0 4px 4px;background:linear-gradient(90deg,#EFEDE3 0%,#DAD7C7 55%,#BDB9A5 100%)"></div>
<div class="a" style="left:16px;top:623px;width:1px;height:5px;background:#000;box-shadow:1px 0 0 #fff"></div>
<div class="a" style="left:19px;top:623px;width:0;height:0;border-top:2.5px solid transparent;border-bottom:2.5px solid transparent;border-left:3px solid #000;filter:drop-shadow(1px 1px 0 #fff)"></div>
<svg width="30" height="733" style="left:0;top:0"><defs><linearGradient id="selg" x1="0" y1="0" x2="0" y2="1"><stop offset="0" stop-color="#DCE6F7"/><stop offset="1" stop-color="#6F90D2"/></linearGradient></defs>
<rect x="3.5" y="109.5" width="19" height="19" fill="url(#selg)" stroke="#3B5EA8" stroke-width="1"/>
<path d="M8.5 111.5V122.5L11 120L13.5 125L15.5 124L13.2 119.2H17Z" fill="#5FE0E8" stroke="#161616" stroke-width="1.1"/>
<path d="M5 134.5H19.5" stroke="#161616" stroke-width="1.1"/><rect x="10.5" y="132.5" width="4" height="4" fill="#A0A8B8" stroke="#161616" stroke-width="0.9"/>
<path d="M12.5 137.5V146L14.3 144.5L15.8 147.6L17 147L15.7 144H18Z" fill="#9AA0B0" stroke="#161616" stroke-width="1"/>
<path d="M2 154.5H23" stroke="#C9C6B4"/><path d="M2 155.5H23" stroke="#fff" opacity="0.8"/>
<circle cx="13.1" cy="167.8" r="1.7" fill="none" stroke="#222" stroke-width="1.2"/>
<path d="M2 182.5H23" stroke="#C9C6B4"/><path d="M2 183.5H23" stroke="#fff" opacity="0.8"/>
<path d="M6.8 189.5L18.3 201" stroke="#2A2A2A" stroke-width="2" stroke-linecap="round"/>
<path d="M7.3 210.8L18.3 222.3" stroke="#2A2A2A" stroke-width="2" stroke-linecap="round"/><path d="M11.5 215L14 217.5" stroke="#9AA6B8" stroke-width="1.4"/>
<path d="M9 233L18 242M18 233L9 242" stroke="#B8C4E0" stroke-width="4"/><path d="M7.5 231.5L19.5 243.5M19.5 231.5L7.5 243.5M11.5 231.5V236M15.5 231.5V236M11.5 239V243.5M15.5 239V243.5" stroke="#111" stroke-width="1.1" stroke-dasharray="1.2 0.9"/><path d="M6.5 231.5H10M17 231.5H20.5M6.5 243.5H10M17 243.5H20.5" stroke="#111" stroke-width="1.6"/><path d="M13.5 232V235M13.5 240V243" stroke="#111" stroke-width="1"/>
<rect x="6.5" y="251.5" width="14" height="13.5" fill="#E4E8EE" stroke="#222" stroke-width="1.2" stroke-dasharray="1.6 1"/><path d="M9 255H18M9 258.3H18M9 261.6H18" stroke="#222" stroke-width="1"/><rect x="12.3" y="257.3" width="2.4" height="2" fill="#9AA"/>
<path d="M2 273.5H23" stroke="#C9C6B4"/><path d="M2 274.5H23" stroke="#fff" opacity="0.8"/>
<path d="M5.5 280.5H20.5L14.2 293.5L5.5 289.5Z" fill="#C3CAD6" stroke="#2A2A2A" stroke-width="1.3"/>
<rect x="5.5" y="301.5" width="14.5" height="12.3" fill="#C3CAD6" stroke="#2A2A2A" stroke-width="1.3"/>
<rect x="5.5" y="322.5" width="14.5" height="12.3" fill="#C3CAD6" stroke="#2A2A2A" stroke-width="1.3"/><circle cx="12.7" cy="328.6" r="0.9" fill="#889"/>
<path d="M6.5 348.5L9 344.5H18.5V351.5L16 355.5H6.5Z" fill="#8FA3C4" stroke="#2A2A2A" stroke-width="1.1"/><path d="M6.5 348.5H16V355.5M16 348.5L18.5 344.5" stroke="#2A2A2A" stroke-width="1" fill="none"/>
<text x="4.8" y="400.8" font-family='"Liberation Sans",sans-serif' font-size="11" fill="#161616" font-weight="normal" >all</text>
<path transform="translate(15.5 387.2) scale(1.0)" d="M0 0V7L1.8 5.5L3.2 8.3L4.5 7.6L3.2 5H5.5Z" fill="#fff" stroke="#14146E" stroke-width="0.9"/>
<text x="4.5" y="420.3" font-family='"Liberation Sans",sans-serif' font-size="11" fill="#161616" font-weight="normal" >ps</text>
<path transform="translate(15.5 407.3) scale(1.0)" d="M0 0V7L1.8 5.5L3.2 8.3L4.5 7.6L3.2 5H5.5Z" fill="#fff" stroke="#14146E" stroke-width="0.9"/>
<text x="4.6" y="441.7" font-family='"Liberation Sans",sans-serif' font-size="11" fill="#555" font-weight="normal" >clr</text>
<path transform="translate(15.5 429.5) scale(1.0)" d="M0 0V7L1.8 5.5L3.2 8.3L4.5 7.6L3.2 5H5.5Z" fill="#eee" stroke="#888" stroke-width="0.9"/>
<path d="M7 453V464M9.5 455V464M12 457.5V464M14.5 460V464" stroke="#222" stroke-width="1" stroke-dasharray="1 1"/><path d="M6.5 450L20.5 464" stroke="#111" stroke-width="1.6"/>
<path transform="translate(15.2 449.8) scale(1.0)" d="M0 0V7L1.8 5.5L3.2 8.3L4.5 7.6L3.2 5H5.5Z" fill="#fff" stroke="#14146E" stroke-width="0.9"/>
<path d="M6 500H12M13.3 494V506.5" stroke="#111" stroke-width="1.2"/><rect x="11.8" y="498.5" width="3" height="3" fill="#30C8C8"/><path d="M20.2 494.5V505.5L16.2 500Z" fill="#111"/>
<path d="M10.3 515V528" stroke="#30C8D0" stroke-width="2.6" stroke-dasharray="1.3 0.7"/><path d="M17.5 517.5V525.2L13 521.3Z" fill="#111"/>
<path d="M6 537.2L19 549.7M19 537.2L6 549.7" stroke="#222" stroke-width="1"/><rect x="11.3" y="542.3" width="2.4" height="2.4" fill="#9DD" stroke="#222" stroke-width="0.6"/><path d="M19.2 538V548.5L14.7 543.3Z" fill="#101070"/>
<path d="M6 563.5H12.5M12.5 557.4V569.4" stroke="#113" stroke-width="1.3"/><path d="M19.2 560V567L14.7 563.5Z" fill="#111"/>
<path d="M11.5 578.2V590.7" stroke="#111" stroke-width="1.3"/><rect x="12.3" y="579" width="2" height="11" fill="#9EE8F0"/><path d="M18 581V587.5L14 584.2Z" fill="#111"/>
<rect x="6" y="599" width="1" height="1" fill="#111"/><rect x="6" y="601" width="1" height="1" fill="#111"/><rect x="6" y="603" width="1" height="1" fill="#111"/><rect x="6" y="605" width="1" height="1" fill="#111"/><rect x="6" y="607" width="1" height="1" fill="#111"/><rect x="6" y="609" width="1" height="1" fill="#111"/><rect x="6" y="611" width="1" height="1" fill="#111"/><rect x="8" y="599" width="1" height="1" fill="#111"/><rect x="8" y="601" width="1" height="1" fill="#111"/><rect x="8" y="603" width="1" height="1" fill="#111"/><rect x="8" y="605" width="1" height="1" fill="#111"/><rect x="8" y="607" width="1" height="1" fill="#111"/><rect x="8" y="609" width="1" height="1" fill="#111"/><rect x="8" y="611" width="1" height="1" fill="#111"/><rect x="10" y="599" width="1" height="1" fill="#111"/><rect x="10" y="601" width="1" height="1" fill="#111"/><rect x="10" y="603" width="1" height="1" fill="#111"/><rect x="10" y="605" width="1" height="1" fill="#111"/><rect x="10" y="607" width="1" height="1" fill="#111"/><rect x="10" y="609" width="1" height="1" fill="#111"/><rect x="10" y="611" width="1" height="1" fill="#111"/><rect x="12" y="599" width="1" height="1" fill="#111"/><rect x="12" y="601" width="1" height="1" fill="#111"/><rect x="12" y="603" width="1" height="1" fill="#111"/><rect x="12" y="605" width="1" height="1" fill="#111"/><rect x="12" y="607" width="1" height="1" fill="#111"/><rect x="12" y="609" width="1" height="1" fill="#111"/><rect x="12" y="611" width="1" height="1" fill="#111"/><rect x="14" y="599" width="1" height="1" fill="#111"/><rect x="14" y="601" width="1" height="1" fill="#111"/><rect x="14" y="603" width="1" height="1" fill="#111"/><rect x="14" y="605" width="1" height="1" fill="#111"/><rect x="14" y="607" width="1" height="1" fill="#111"/><rect x="14" y="609" width="1" height="1" fill="#111"/><rect x="14" y="611" width="1" height="1" fill="#111"/><rect x="16" y="599" width="1" height="1" fill="#111"/><rect x="16" y="601" width="1" height="1" fill="#111"/><rect x="16" y="603" width="1" height="1" fill="#111"/><rect x="16" y="605" width="1" height="1" fill="#111"/><rect x="16" y="607" width="1" height="1" fill="#111"/><rect x="16" y="609" width="1" height="1" fill="#111"/><rect x="16" y="611" width="1" height="1" fill="#111"/><rect x="18" y="599" width="1" height="1" fill="#111"/><rect x="18" y="601" width="1" height="1" fill="#111"/><rect x="18" y="603" width="1" height="1" fill="#111"/><rect x="18" y="605" width="1" height="1" fill="#111"/><rect x="18" y="607" width="1" height="1" fill="#111"/><rect x="18" y="609" width="1" height="1" fill="#111"/><rect x="18" y="611" width="1" height="1" fill="#111"/>
<rect x="10.5" y="603.5" width="4" height="4" fill="#40D0D0"/><path d="M20 601V610L15.2 605.5Z" fill="#111"/></svg>
<div class="a" style="left:26px;top:100px;width:1339px;height:607px;background:#A3A294"></div>
<div class="a" style="left:27px;top:101px;width:1338px;height:606px;background:#6C6B63"></div>
<div class="a" style="left:28px;top:102px;width:1337px;height:605px;background:#fff"></div>
<div class="a" style="left:1364px;top:101px;width:1px;height:606px;background:#D4D4D0;z-index:5"></div>
<svg width="1365" height="733" style="left:0;top:0" viewBox="0 0 1365 733">
<path d="M893.4 226.7L892.6 239.7M900.2 229.3L899.4 242.3M907.1 231.9L906.3 244.9M913.9 234.4L913.1 247.4M920.8 237.0L920.0 250.0M927.6 239.6L926.8 252.6M934.5 242.2L933.7 255.2M941.3 244.8L940.5 257.8M948.1 247.4L947.3 260.4M955.0 249.9L954.2 262.9M961.8 252.5L961.0 265.5M968.7 255.1L967.9 268.1M975.5 257.7L974.7 270.7" stroke="#5CD65C" stroke-width="1" fill="none"/><path d="M885.9 239.7L895.1 239.7M892.7 242.3L901.9 242.3M899.6 244.9L908.8 244.9M906.4 247.4L915.6 247.4M913.3 250.0L922.5 250.0M920.1 252.6L929.3 252.6M927.0 255.2L936.2 255.2M933.8 257.8L943.0 257.8M940.6 260.4L949.8 260.4M947.5 262.9L956.7 262.9M954.3 265.5L963.5 265.5M961.2 268.1L970.4 268.1M968.0 270.7L977.2 270.7" stroke="#2AD82A" stroke-width="1.15" fill="none"/><path d="M885.4 230.7L887.4 229.8L889.3 232.2L891.3 234.5L893.2 233.7L895.2 232.8L897.2 235.2L899.1 237.5L901.1 236.7L903.0 235.8L905.0 238.2L907.0 240.5L908.9 239.7L910.9 238.8L912.8 241.2L914.8 243.5L916.8 242.7L918.7 241.8L920.7 244.2L922.6 246.5L924.6 245.7L926.6 244.8L928.5 247.2L930.5 249.5L932.5 248.7L934.4 247.8L936.4 250.2L938.3 252.5L940.3 251.7L942.3 250.8L944.2 253.2L946.2 255.5L948.1 254.7L950.1 253.8L952.1 256.2L954.0 258.6L956.0 257.7L957.9 256.8L959.9 259.2L961.9 261.6L963.8 260.7L965.8 259.8L967.7 262.2L969.7 264.6L971.7 263.7L973.6 262.8L975.6 265.2L977.5 267.6L979.5 266.7" stroke="#2AD82A" stroke-width="1.2" fill="none"/>
<path d="M904.5 146.7L911.9 149.1L910.9 155.8L903.6 153.4Z" fill="#F08C20" stroke="#F08C20" stroke-width="0.6"/>
<path d="M903.6 153.4L910.9 155.8L909.9 162.5L902.6 160.0Z" fill="#EA7E1A" stroke="#EA7E1A" stroke-width="0.6"/>
<path d="M902.6 160.0L909.9 162.5L908.9 169.1L901.7 166.7Z" fill="#EA7E1A" stroke="#EA7E1A" stroke-width="0.6"/>
<path d="M901.7 166.7L908.9 169.1L908.0 175.8L900.8 173.4Z" fill="#EA7E1A" stroke="#EA7E1A" stroke-width="0.6"/>
<path d="M900.8 173.4L908.0 175.8L907.0 182.5L899.9 180.0Z" fill="#EA7E1A" stroke="#EA7E1A" stroke-width="0.6"/>
<path d="M899.9 180.0L907.0 182.5L906.0 189.2L899.0 186.7Z" fill="#EA7E1A" stroke="#EA7E1A" stroke-width="0.6"/>
<path d="M899.0 186.7L906.0 189.2L905.1 195.9L898.0 193.4Z" fill="#EA7E1A" stroke="#EA7E1A" stroke-width="0.6"/>
<path d="M898.0 193.4L905.1 195.9L904.1 202.6L897.1 200.0Z" fill="#F08C20" stroke="#F08C20" stroke-width="0.6"/>
<path d="M897.1 200.0L904.1 202.6L903.1 209.2L896.2 206.7Z" fill="#F49A24" stroke="#F49A24" stroke-width="0.6"/>
<path d="M896.2 206.7L903.1 209.2L902.2 215.9L895.2 213.4Z" fill="#F7AA2A" stroke="#F7AA2A" stroke-width="0.6"/>
<path d="M895.2 213.4L902.2 215.9L901.2 222.6L894.3 220.0Z" fill="#F7AA2A" stroke="#F7AA2A" stroke-width="0.6"/>
<path d="M894.3 220.0L901.2 222.6L900.2 229.3L893.4 226.7Z" fill="#F7AA2A" stroke="#F7AA2A" stroke-width="0.6"/>
<path d="M911.9 149.1L919.2 151.5L918.2 158.2L910.9 155.8Z" fill="#EA7E1A" stroke="#EA7E1A" stroke-width="0.6"/>
<path d="M910.9 155.8L918.2 158.2L917.2 164.9L909.9 162.5Z" fill="#EA7E1A" stroke="#EA7E1A" stroke-width="0.6"/>
<path d="M909.9 162.5L917.2 164.9L916.2 171.6L908.9 169.1Z" fill="#EA7E1A" stroke="#EA7E1A" stroke-width="0.6"/>
<path d="M908.9 169.1L916.2 171.6L915.2 178.3L908.0 175.8Z" fill="#EA7E1A" stroke="#EA7E1A" stroke-width="0.6"/>
<path d="M908.0 175.8L915.2 178.3L914.2 185.0L907.0 182.5Z" fill="#EA7E1A" stroke="#EA7E1A" stroke-width="0.6"/>
<path d="M907.0 182.5L914.2 185.0L913.1 191.7L906.0 189.2Z" fill="#EA7E1A" stroke="#EA7E1A" stroke-width="0.6"/>
<path d="M906.0 189.2L913.1 191.7L912.1 198.4L905.1 195.9Z" fill="#F08C20" stroke="#F08C20" stroke-width="0.6"/>
<path d="M905.1 195.9L912.1 198.4L911.1 205.1L904.1 202.6Z" fill="#F49A24" stroke="#F49A24" stroke-width="0.6"/>
<path d="M904.1 202.6L911.1 205.1L910.1 211.8L903.1 209.2Z" fill="#F49A24" stroke="#F49A24" stroke-width="0.6"/>
<path d="M903.1 209.2L910.1 211.8L909.1 218.5L902.2 215.9Z" fill="#F7AA2A" stroke="#F7AA2A" stroke-width="0.6"/>
<path d="M902.2 215.9L909.1 218.5L908.1 225.2L901.2 222.6Z" fill="#F7AA2A" stroke="#F7AA2A" stroke-width="0.6"/>
<path d="M901.2 222.6L908.1 225.2L907.1 231.9L900.2 229.3Z" fill="#F7AA2A" stroke="#F7AA2A" stroke-width="0.6"/>
<path d="M919.2 151.5L926.5 153.9L925.5 160.6L918.2 158.2Z" fill="#EA7E1A" stroke="#EA7E1A" stroke-width="0.6"/>
<path d="M918.2 158.2L925.5 160.6L924.4 167.3L917.2 164.9Z" fill="#EA7E1A" stroke="#EA7E1A" stroke-width="0.6"/>
<path d="M917.2 164.9L924.4 167.3L923.4 174.0L916.2 171.6Z" fill="#EA7E1A" stroke="#EA7E1A" stroke-width="0.6"/>
<path d="M916.2 171.6L923.4 174.0L922.3 180.7L915.2 178.3Z" fill="#EA7E1A" stroke="#EA7E1A" stroke-width="0.6"/>
<path d="M915.2 178.3L922.3 180.7L921.3 187.4L914.2 185.0Z" fill="#EA7E1A" stroke="#EA7E1A" stroke-width="0.6"/>
<path d="M914.2 185.0L921.3 187.4L920.2 194.2L913.1 191.7Z" fill="#EA7E1A" stroke="#EA7E1A" stroke-width="0.6"/>
<path d="M913.1 191.7L920.2 194.2L919.2 200.9L912.1 198.4Z" fill="#F08C20" stroke="#F08C20" stroke-width="0.6"/>
<path d="M912.1 198.4L919.2 200.9L918.1 207.6L911.1 205.1Z" fill="#F49A24" stroke="#F49A24" stroke-width="0.6"/>
<path d="M911.1 205.1L918.1 207.6L917.1 214.3L910.1 211.8Z" fill="#F49A24" stroke="#F49A24" stroke-width="0.6"/>
<path d="M910.1 211.8L917.1 214.3L916.0 221.0L909.1 218.5Z" fill="#F49A24" stroke="#F49A24" stroke-width="0.6"/>
<path d="M909.1 218.5L916.0 221.0L915.0 227.7L908.1 225.2Z" fill="#F49A24" stroke="#F49A24" stroke-width="0.6"/>
<path d="M908.1 225.2L915.0 227.7L913.9 234.4L907.1 231.9Z" fill="#F49A24" stroke="#F49A24" stroke-width="0.6"/>
<path d="M926.5 153.9L933.9 156.3L932.8 163.0L925.5 160.6Z" fill="#EA7E1A" stroke="#EA7E1A" stroke-width="0.6"/>
<path d="M925.5 160.6L932.8 163.0L931.7 169.7L924.4 167.3Z" fill="#EA7E1A" stroke="#EA7E1A" stroke-width="0.6"/>
<path d="M924.4 167.3L931.7 169.7L930.6 176.5L923.4 174.0Z" fill="#EA7E1A" stroke="#EA7E1A" stroke-width="0.6"/>
<path d="M923.4 174.0L930.6 176.5L929.5 183.2L922.3 180.7Z" fill="#EA7E1A" stroke="#EA7E1A" stroke-width="0.6"/>
<path d="M922.3 180.7L929.5 183.2L928.4 189.9L921.3 187.4Z" fill="#F08C20" stroke="#F08C20" stroke-width="0.6"/>
<path d="M921.3 187.4L928.4 189.9L927.3 196.6L920.2 194.2Z" fill="#F08C20" stroke="#F08C20" stroke-width="0.6"/>
<path d="M920.2 194.2L927.3 196.6L926.2 203.4L919.2 200.9Z" fill="#F08C20" stroke="#F08C20" stroke-width="0.6"/>
<path d="M919.2 200.9L926.2 203.4L925.1 210.1L918.1 207.6Z" fill="#F08C20" stroke="#F08C20" stroke-width="0.6"/>
<path d="M918.1 207.6L925.1 210.1L924.0 216.8L917.1 214.3Z" fill="#F08C20" stroke="#F08C20" stroke-width="0.6"/>
<path d="M917.1 214.3L924.0 216.8L923.0 223.6L916.0 221.0Z" fill="#F08C20" stroke="#F08C20" stroke-width="0.6"/>
<path d="M916.0 221.0L923.0 223.6L921.9 230.3L915.0 227.7Z" fill="#F08C20" stroke="#F08C20" stroke-width="0.6"/>
<path d="M915.0 227.7L921.9 230.3L920.8 237.0L913.9 234.4Z" fill="#F08C20" stroke="#F08C20" stroke-width="0.6"/>
<path d="M933.9 156.3L941.2 158.7L940.1 165.4L932.8 163.0Z" fill="#EA7E1A" stroke="#EA7E1A" stroke-width="0.6"/>
<path d="M932.8 163.0L940.1 165.4L939.0 172.2L931.7 169.7Z" fill="#EA7E1A" stroke="#EA7E1A" stroke-width="0.6"/>
<path d="M931.7 169.7L939.0 172.2L937.8 178.9L930.6 176.5Z" fill="#F08C20" stroke="#F08C20" stroke-width="0.6"/>
<path d="M930.6 176.5L937.8 178.9L936.7 185.6L929.5 183.2Z" fill="#F08C20" stroke="#F08C20" stroke-width="0.6"/>
<path d="M929.5 183.2L936.7 185.6L935.6 192.4L928.4 189.9Z" fill="#F49A24" stroke="#F49A24" stroke-width="0.6"/>
<path d="M928.4 189.9L935.6 192.4L934.4 199.1L927.3 196.6Z" fill="#F49A24" stroke="#F49A24" stroke-width="0.6"/>
<path d="M927.3 196.6L934.4 199.1L933.3 205.9L926.2 203.4Z" fill="#F49A24" stroke="#F49A24" stroke-width="0.6"/>
<path d="M926.2 203.4L933.3 205.9L932.2 212.6L925.1 210.1Z" fill="#F08C20" stroke="#F08C20" stroke-width="0.6"/>
<path d="M925.1 210.1L932.2 212.6L931.0 219.4L924.0 216.8Z" fill="#F08C20" stroke="#F08C20" stroke-width="0.6"/>
<path d="M924.0 216.8L931.0 219.4L929.9 226.1L923.0 223.6Z" fill="#F08C20" stroke="#F08C20" stroke-width="0.6"/>
<path d="M923.0 223.6L929.9 226.1L928.7 232.9L921.9 230.3Z" fill="#F08C20" stroke="#F08C20" stroke-width="0.6"/>
<path d="M921.9 230.3L928.7 232.9L927.6 239.6L920.8 237.0Z" fill="#F08C20" stroke="#F08C20" stroke-width="0.6"/>
<path d="M941.2 158.7L948.6 161.1L947.4 167.8L940.1 165.4Z" fill="#F08C20" stroke="#F08C20" stroke-width="0.6"/>
<path d="M940.1 165.4L947.4 167.8L946.2 174.6L939.0 172.2Z" fill="#F49A24" stroke="#F49A24" stroke-width="0.6"/>
<path d="M939.0 172.2L946.2 174.6L945.1 181.3L937.8 178.9Z" fill="#F49A24" stroke="#F49A24" stroke-width="0.6"/>
<path d="M937.8 178.9L945.1 181.3L943.9 188.1L936.7 185.6Z" fill="#F7AA2A" stroke="#F7AA2A" stroke-width="0.6"/>
<path d="M936.7 185.6L943.9 188.1L942.7 194.9L935.6 192.4Z" fill="#F7AA2A" stroke="#F7AA2A" stroke-width="0.6"/>
<path d="M935.6 192.4L942.7 194.9L941.5 201.6L934.4 199.1Z" fill="#F49A24" stroke="#F49A24" stroke-width="0.6"/>
<path d="M934.4 199.1L941.5 201.6L940.3 208.4L933.3 205.9Z" fill="#F49A24" stroke="#F49A24" stroke-width="0.6"/>
<path d="M933.3 205.9L940.3 208.4L939.2 215.1L932.2 212.6Z" fill="#F08C20" stroke="#F08C20" stroke-width="0.6"/>
<path d="M932.2 212.6L939.2 215.1L938.0 221.9L931.0 219.4Z" fill="#EA7E1A" stroke="#EA7E1A" stroke-width="0.6"/>
<path d="M931.0 219.4L938.0 221.9L936.8 228.7L929.9 226.1Z" fill="#EA7E1A" stroke="#EA7E1A" stroke-width="0.6"/>
<path d="M929.9 226.1L936.8 228.7L935.6 235.4L928.7 232.9Z" fill="#EA7E1A" stroke="#EA7E1A" stroke-width="0.6"/>
<path d="M928.7 232.9L935.6 235.4L934.5 242.2L927.6 239.6Z" fill="#F08C20" stroke="#F08C20" stroke-width="0.6"/>
<path d="M948.6 161.1L956.0 163.4L954.7 170.2L947.4 167.8Z" fill="#F49A24" stroke="#F49A24" stroke-width="0.6"/>
<path d="M947.4 167.8L954.7 170.2L953.5 177.0L946.2 174.6Z" fill="#F7AA2A" stroke="#F7AA2A" stroke-width="0.6"/>
<path d="M946.2 174.6L953.5 177.0L952.3 183.8L945.1 181.3Z" fill="#F7AA2A" stroke="#F7AA2A" stroke-width="0.6"/>
<path d="M945.1 181.3L952.3 183.8L951.1 190.6L943.9 188.1Z" fill="#F7AA2A" stroke="#F7AA2A" stroke-width="0.6"/>
<path d="M943.9 188.1L951.1 190.6L949.8 197.3L942.7 194.9Z" fill="#F7AA2A" stroke="#F7AA2A" stroke-width="0.6"/>
<path d="M942.7 194.9L949.8 197.3L948.6 204.1L941.5 201.6Z" fill="#F49A24" stroke="#F49A24" stroke-width="0.6"/>
<path d="M941.5 201.6L948.6 204.1L947.4 210.9L940.3 208.4Z" fill="#F08C20" stroke="#F08C20" stroke-width="0.6"/>
<path d="M940.3 208.4L947.4 210.9L946.2 217.7L939.2 215.1Z" fill="#F08C20" stroke="#F08C20" stroke-width="0.6"/>
<path d="M939.2 215.1L946.2 217.7L945.0 224.4L938.0 221.9Z" fill="#EA7E1A" stroke="#EA7E1A" stroke-width="0.6"/>
<path d="M938.0 221.9L945.0 224.4L943.7 231.2L936.8 228.7Z" fill="#EA7E1A" stroke="#EA7E1A" stroke-width="0.6"/>
<path d="M936.8 228.7L943.7 231.2L942.5 238.0L935.6 235.4Z" fill="#EA7E1A" stroke="#EA7E1A" stroke-width="0.6"/>
<path d="M935.6 235.4L942.5 238.0L941.3 244.8L934.5 242.2Z" fill="#EA7E1A" stroke="#EA7E1A" stroke-width="0.6"/>
<path d="M956.0 163.4L963.3 165.8L962.0 172.6L954.7 170.2Z" fill="#F49A24" stroke="#F49A24" stroke-width="0.6"/>
<path d="M954.7 170.2L962.0 172.6L960.8 179.4L953.5 177.0Z" fill="#F7AA2A" stroke="#F7AA2A" stroke-width="0.6"/>
<path d="M953.5 177.0L960.8 179.4L959.5 186.2L952.3 183.8Z" fill="#F7AA2A" stroke="#F7AA2A" stroke-width="0.6"/>
<path d="M952.3 183.8L959.5 186.2L958.2 193.0L951.1 190.6Z" fill="#F7AA2A" stroke="#F7AA2A" stroke-width="0.6"/>
<path d="M951.1 190.6L958.2 193.0L957.0 199.8L949.8 197.3Z" fill="#F7AA2A" stroke="#F7AA2A" stroke-width="0.6"/>
<path d="M949.8 197.3L957.0 199.8L955.7 206.6L948.6 204.1Z" fill="#F49A24" stroke="#F49A24" stroke-width="0.6"/>
<path d="M948.6 204.1L955.7 206.6L954.5 213.4L947.4 210.9Z" fill="#F08C20" stroke="#F08C20" stroke-width="0.6"/>
<path d="M947.4 210.9L954.5 213.4L953.2 220.2L946.2 217.7Z" fill="#F08C20" stroke="#F08C20" stroke-width="0.6"/>
<path d="M946.2 217.7L953.2 220.2L951.9 227.0L945.0 224.4Z" fill="#EA7E1A" stroke="#EA7E1A" stroke-width="0.6"/>
<path d="M945.0 224.4L951.9 227.0L950.7 233.8L943.7 231.2Z" fill="#EA7E1A" stroke="#EA7E1A" stroke-width="0.6"/>
<path d="M943.7 231.2L950.7 233.8L949.4 240.6L942.5 238.0Z" fill="#EA7E1A" stroke="#EA7E1A" stroke-width="0.6"/>
<path d="M942.5 238.0L949.4 240.6L948.1 247.4L941.3 244.8Z" fill="#EA7E1A" stroke="#EA7E1A" stroke-width="0.6"/>
<path d="M963.3 165.8L970.7 168.2L969.3 175.0L962.0 172.6Z" fill="#F7AA2A" stroke="#F7AA2A" stroke-width="0.6"/>
<path d="M962.0 172.6L969.3 175.0L968.0 181.8L960.8 179.4Z" fill="#F7AA2A" stroke="#F7AA2A" stroke-width="0.6"/>
<path d="M960.8 179.4L968.0 181.8L966.7 188.7L959.5 186.2Z" fill="#F7AA2A" stroke="#F7AA2A" stroke-width="0.6"/>
<path d="M959.5 186.2L966.7 188.7L965.4 195.5L958.2 193.0Z" fill="#F7AA2A" stroke="#F7AA2A" stroke-width="0.6"/>
<path d="M958.2 193.0L965.4 195.5L964.1 202.3L957.0 199.8Z" fill="#F7AA2A" stroke="#F7AA2A" stroke-width="0.6"/>
<path d="M957.0 199.8L964.1 202.3L962.8 209.1L955.7 206.6Z" fill="#F49A24" stroke="#F49A24" stroke-width="0.6"/>
<path d="M955.7 206.6L962.8 209.1L961.5 215.9L954.5 213.4Z" fill="#F08C20" stroke="#F08C20" stroke-width="0.6"/>
<path d="M954.5 213.4L961.5 215.9L960.2 222.7L953.2 220.2Z" fill="#F08C20" stroke="#F08C20" stroke-width="0.6"/>
<path d="M953.2 220.2L960.2 222.7L958.9 229.5L951.9 227.0Z" fill="#F08C20" stroke="#F08C20" stroke-width="0.6"/>
<path d="M951.9 227.0L958.9 229.5L957.6 236.3L950.7 233.8Z" fill="#F08C20" stroke="#F08C20" stroke-width="0.6"/>
<path d="M950.7 233.8L957.6 236.3L956.3 243.1L949.4 240.6Z" fill="#F08C20" stroke="#F08C20" stroke-width="0.6"/>
<path d="M949.4 240.6L956.3 243.1L955.0 249.9L948.1 247.4Z" fill="#EA7E1A" stroke="#EA7E1A" stroke-width="0.6"/>
<path d="M970.7 168.2L978.0 170.6L976.7 177.4L969.3 175.0Z" fill="#F7AA2A" stroke="#F7AA2A" stroke-width="0.6"/>
<path d="M969.3 175.0L976.7 177.4L975.3 184.3L968.0 181.8Z" fill="#F7AA2A" stroke="#F7AA2A" stroke-width="0.6"/>
<path d="M968.0 181.8L975.3 184.3L974.0 191.1L966.7 188.7Z" fill="#F7AA2A" stroke="#F7AA2A" stroke-width="0.6"/>
<path d="M966.7 188.7L974.0 191.1L972.6 197.9L965.4 195.5Z" fill="#F7AA2A" stroke="#F7AA2A" stroke-width="0.6"/>
<path d="M965.4 195.5L972.6 197.9L971.3 204.7L964.1 202.3Z" fill="#F49A24" stroke="#F49A24" stroke-width="0.6"/>
<path d="M964.1 202.3L971.3 204.7L969.9 211.6L962.8 209.1Z" fill="#F49A24" stroke="#F49A24" stroke-width="0.6"/>
<path d="M962.8 209.1L969.9 211.6L968.6 218.4L961.5 215.9Z" fill="#F49A24" stroke="#F49A24" stroke-width="0.6"/>
<path d="M961.5 215.9L968.6 218.4L967.2 225.2L960.2 222.7Z" fill="#F08C20" stroke="#F08C20" stroke-width="0.6"/>
<path d="M960.2 222.7L967.2 225.2L965.9 232.1L958.9 229.5Z" fill="#F08C20" stroke="#F08C20" stroke-width="0.6"/>
<path d="M958.9 229.5L965.9 232.1L964.5 238.9L957.6 236.3Z" fill="#F08C20" stroke="#F08C20" stroke-width="0.6"/>
<path d="M957.6 236.3L964.5 238.9L963.2 245.7L956.3 243.1Z" fill="#F08C20" stroke="#F08C20" stroke-width="0.6"/>
<path d="M956.3 243.1L963.2 245.7L961.8 252.5L955.0 249.9Z" fill="#EA7E1A" stroke="#EA7E1A" stroke-width="0.6"/>
<path d="M978.0 170.6L985.4 173.0L984.0 179.9L976.7 177.4Z" fill="#F49A24" stroke="#F49A24" stroke-width="0.6"/>
<path d="M976.7 177.4L984.0 179.9L982.6 186.7L975.3 184.3Z" fill="#F49A24" stroke="#F49A24" stroke-width="0.6"/>
<path d="M975.3 184.3L982.6 186.7L981.2 193.5L974.0 191.1Z" fill="#F49A24" stroke="#F49A24" stroke-width="0.6"/>
<path d="M974.0 191.1L981.2 193.5L979.8 200.4L972.6 197.9Z" fill="#F49A24" stroke="#F49A24" stroke-width="0.6"/>
<path d="M972.6 197.9L979.8 200.4L978.4 207.2L971.3 204.7Z" fill="#F49A24" stroke="#F49A24" stroke-width="0.6"/>
<path d="M971.3 204.7L978.4 207.2L977.0 214.1L969.9 211.6Z" fill="#F49A24" stroke="#F49A24" stroke-width="0.6"/>
<path d="M969.9 211.6L977.0 214.1L975.6 220.9L968.6 218.4Z" fill="#F49A24" stroke="#F49A24" stroke-width="0.6"/>
<path d="M968.6 218.4L975.6 220.9L974.2 227.7L967.2 225.2Z" fill="#F49A24" stroke="#F49A24" stroke-width="0.6"/>
<path d="M967.2 225.2L974.2 227.7L972.8 234.6L965.9 232.1Z" fill="#F49A24" stroke="#F49A24" stroke-width="0.6"/>
<path d="M965.9 232.1L972.8 234.6L971.4 241.4L964.5 238.9Z" fill="#F49A24" stroke="#F49A24" stroke-width="0.6"/>
<path d="M964.5 238.9L971.4 241.4L970.0 248.3L963.2 245.7Z" fill="#F08C20" stroke="#F08C20" stroke-width="0.6"/>
<path d="M963.2 245.7L970.0 248.3L968.7 255.1L961.8 252.5Z" fill="#EA7E1A" stroke="#EA7E1A" stroke-width="0.6"/>
<path d="M985.4 173.0L992.7 175.4L991.3 182.3L984.0 179.9Z" fill="#F49A24" stroke="#F49A24" stroke-width="0.6"/>
<path d="M984.0 179.9L991.3 182.3L989.8 189.1L982.6 186.7Z" fill="#F08C20" stroke="#F08C20" stroke-width="0.6"/>
<path d="M982.6 186.7L989.8 189.1L988.4 196.0L981.2 193.5Z" fill="#F08C20" stroke="#F08C20" stroke-width="0.6"/>
<path d="M981.2 193.5L988.4 196.0L987.0 202.8L979.8 200.4Z" fill="#F08C20" stroke="#F08C20" stroke-width="0.6"/>
<path d="M979.8 200.4L987.0 202.8L985.5 209.7L978.4 207.2Z" fill="#F08C20" stroke="#F08C20" stroke-width="0.6"/>
<path d="M978.4 207.2L985.5 209.7L984.1 216.6L977.0 214.1Z" fill="#F49A24" stroke="#F49A24" stroke-width="0.6"/>
<path d="M977.0 214.1L984.1 216.6L982.7 223.4L975.6 220.9Z" fill="#F49A24" stroke="#F49A24" stroke-width="0.6"/>
<path d="M975.6 220.9L982.7 223.4L981.2 230.3L974.2 227.7Z" fill="#F49A24" stroke="#F49A24" stroke-width="0.6"/>
<path d="M974.2 227.7L981.2 230.3L979.8 237.1L972.8 234.6Z" fill="#F49A24" stroke="#F49A24" stroke-width="0.6"/>
<path d="M972.8 234.6L979.8 237.1L978.4 244.0L971.4 241.4Z" fill="#F49A24" stroke="#F49A24" stroke-width="0.6"/>
<path d="M971.4 241.4L978.4 244.0L976.9 250.8L970.0 248.3Z" fill="#F08C20" stroke="#F08C20" stroke-width="0.6"/>
<path d="M970.0 248.3L976.9 250.8L975.5 257.7L968.7 255.1Z" fill="#F08C20" stroke="#F08C20" stroke-width="0.6"/>
<path d="M911.9 149.1L900.2 229.3M919.2 151.5L907.1 231.9M926.5 153.9L913.9 234.4M933.9 156.3L920.8 237.0M941.2 158.7L927.6 239.6M948.6 161.1L934.5 242.2M956.0 163.4L941.3 244.8M963.3 165.8L948.1 247.4M970.7 168.2L955.0 249.9M978.0 170.6L961.8 252.5M985.4 173.0L968.7 255.1M903.6 153.4L991.3 182.3M902.6 160.0L989.8 189.1M901.7 166.7L988.4 196.0M900.8 173.4L987.0 202.8M899.9 180.0L985.5 209.7M899.0 186.7L984.1 216.6M898.0 193.4L982.7 223.4M897.1 200.0L981.2 230.3M896.2 206.7L979.8 237.1M895.2 213.4L978.4 244.0M894.3 220.0L976.9 250.8" stroke="#1E0E00" stroke-width="1.0" fill="none"/>
<path d="M904.5 146.7L992.7 175.4L975.5 257.7L893.4 226.7Z" stroke="#140900" stroke-width="1.3" fill="none" stroke-linejoin="round"/>
<path d="M769.5 298.0L768.7 313.8M776.6 301.5L775.8 317.3M783.7 305.0L782.9 320.8M790.9 308.4L790.1 324.2M798.0 311.9L797.2 327.7M805.1 315.4L804.3 331.2M812.2 318.9L811.4 334.7M819.3 322.4L818.5 338.2M826.4 325.9L825.6 341.7M833.5 329.4L832.8 345.2M840.7 332.8L839.9 348.6M847.8 336.3L847.0 352.1M854.9 339.8L854.1 355.6" stroke="#5CD65C" stroke-width="1" fill="none"/><path d="M761.5 313.8L773.5 313.8M768.5 309.0L775.5 309.0M768.6 317.3L780.6 317.3M775.6 312.5L782.6 312.5M775.7 320.8L787.7 320.8M782.7 316.0L789.7 316.0M782.9 324.2L794.9 324.2M789.9 319.4L796.9 319.4M790.0 327.7L802.0 327.7M797.0 322.9L804.0 322.9M797.1 331.2L809.1 331.2M804.1 326.4L811.1 326.4M804.2 334.7L816.2 334.7M811.2 329.9L818.2 329.9M811.3 338.2L823.3 338.2M818.3 333.4L825.3 333.4M818.4 341.7L830.4 341.7M825.4 336.9L832.4 336.9M825.5 345.2L837.5 345.2M832.5 340.4L839.5 340.4M832.7 348.6L844.7 348.6M839.7 343.8L846.7 343.8M839.8 352.1L851.8 352.1M846.8 347.3L853.8 347.3M846.9 355.6L858.9 355.6M853.9 350.8L860.9 350.8" stroke="#2AD82A" stroke-width="1.15" fill="none"/><path d="M761.5 302.0L763.5 301.4L765.6 304.1L767.6 306.7L769.7 306.1L771.8 305.5L773.8 308.2L775.9 310.8L777.9 310.2L780.0 309.6L782.0 312.3L784.0 314.9L786.1 314.3L788.1 313.8L790.2 316.4L792.2 319.0L794.3 318.4L796.4 317.9L798.4 320.5L800.5 323.1L802.5 322.5L804.5 322.0L806.6 324.6L808.6 327.2L810.7 326.6L812.8 326.1L814.8 328.7L816.9 331.3L818.9 330.8L820.9 330.2L823.0 332.8L825.0 335.4L827.1 334.9L829.1 334.3L831.2 336.9L833.2 339.5L835.3 339.0L837.4 338.4L839.4 341.0L841.5 343.7L843.5 343.1L845.5 342.5L847.6 345.1L849.6 347.8L851.7 347.2L853.8 346.6L855.8 349.2L857.9 351.9L859.9 351.3" stroke="#2AD82A" stroke-width="1.2" fill="none"/>
<path d="M772.4 209.2L780.1 212.5L779.8 219.9L772.2 216.6Z" fill="#EA7E1A" stroke="#EA7E1A" stroke-width="0.6"/>
<path d="M772.2 216.6L779.8 219.9L779.5 227.3L771.9 224.0Z" fill="#EA7E1A" stroke="#EA7E1A" stroke-width="0.6"/>
<path d="M771.9 224.0L779.5 227.3L779.2 234.8L771.7 231.4Z" fill="#F08C20" stroke="#F08C20" stroke-width="0.6"/>
<path d="M771.7 231.4L779.2 234.8L778.9 242.2L771.4 238.8Z" fill="#F49A24" stroke="#F49A24" stroke-width="0.6"/>
<path d="M771.4 238.8L778.9 242.2L778.6 249.6L771.2 246.2Z" fill="#F7AA2A" stroke="#F7AA2A" stroke-width="0.6"/>
<path d="M771.2 246.2L778.6 249.6L778.3 257.0L771.0 253.6Z" fill="#F7AA2A" stroke="#F7AA2A" stroke-width="0.6"/>
<path d="M771.0 253.6L778.3 257.0L778.1 264.4L770.7 261.0Z" fill="#F7AA2A" stroke="#F7AA2A" stroke-width="0.6"/>
<path d="M770.7 261.0L778.1 264.4L777.8 271.8L770.5 268.4Z" fill="#F7AA2A" stroke="#F7AA2A" stroke-width="0.6"/>
<path d="M770.5 268.4L777.8 271.8L777.5 279.2L770.2 275.8Z" fill="#F49A24" stroke="#F49A24" stroke-width="0.6"/>
<path d="M770.2 275.8L777.5 279.2L777.2 286.7L770.0 283.2Z" fill="#F49A24" stroke="#F49A24" stroke-width="0.6"/>
<path d="M770.0 283.2L777.2 286.7L776.9 294.1L769.7 290.6Z" fill="#F08C20" stroke="#F08C20" stroke-width="0.6"/>
<path d="M769.7 290.6L776.9 294.1L776.6 301.5L769.5 298.0Z" fill="#F08C20" stroke="#F08C20" stroke-width="0.6"/>
<path d="M780.1 212.5L787.8 215.8L787.4 223.2L779.8 219.9Z" fill="#EA7E1A" stroke="#EA7E1A" stroke-width="0.6"/>
<path d="M779.8 219.9L787.4 223.2L787.1 230.7L779.5 227.3Z" fill="#F08C20" stroke="#F08C20" stroke-width="0.6"/>
<path d="M779.5 227.3L787.1 230.7L786.7 238.1L779.2 234.8Z" fill="#F08C20" stroke="#F08C20" stroke-width="0.6"/>
<path d="M779.2 234.8L786.7 238.1L786.4 245.5L778.9 242.2Z" fill="#F49A24" stroke="#F49A24" stroke-width="0.6"/>
<path d="M778.9 242.2L786.4 245.5L786.1 253.0L778.6 249.6Z" fill="#F7AA2A" stroke="#F7AA2A" stroke-width="0.6"/>
<path d="M778.6 249.6L786.1 253.0L785.7 260.4L778.3 257.0Z" fill="#F7AA2A" stroke="#F7AA2A" stroke-width="0.6"/>
<path d="M778.3 257.0L785.7 260.4L785.4 267.8L778.1 264.4Z" fill="#F49A24" stroke="#F49A24" stroke-width="0.6"/>
<path d="M778.1 264.4L785.4 267.8L785.1 275.2L777.8 271.8Z" fill="#F49A24" stroke="#F49A24" stroke-width="0.6"/>
<path d="M777.8 271.8L785.1 275.2L784.7 282.7L777.5 279.2Z" fill="#F08C20" stroke="#F08C20" stroke-width="0.6"/>
<path d="M777.5 279.2L784.7 282.7L784.4 290.1L777.2 286.7Z" fill="#F08C20" stroke="#F08C20" stroke-width="0.6"/>
<path d="M777.2 286.7L784.4 290.1L784.1 297.5L776.9 294.1Z" fill="#F08C20" stroke="#F08C20" stroke-width="0.6"/>
<path d="M776.9 294.1L784.1 297.5L783.7 305.0L776.6 301.5Z" fill="#F08C20" stroke="#F08C20" stroke-width="0.6"/>
<path d="M787.8 215.8L795.4 219.1L795.0 226.6L787.4 223.2Z" fill="#F08C20" stroke="#F08C20" stroke-width="0.6"/>
<path d="M787.4 223.2L795.0 226.6L794.7 234.0L787.1 230.7Z" fill="#F49A24" stroke="#F49A24" stroke-width="0.6"/>
<path d="M787.1 230.7L794.7 234.0L794.3 241.5L786.7 238.1Z" fill="#F49A24" stroke="#F49A24" stroke-width="0.6"/>
<path d="M786.7 238.1L794.3 241.5L793.9 248.9L786.4 245.5Z" fill="#F49A24" stroke="#F49A24" stroke-width="0.6"/>
<path d="M786.4 245.5L793.9 248.9L793.5 256.3L786.1 253.0Z" fill="#F49A24" stroke="#F49A24" stroke-width="0.6"/>
<path d="M786.1 253.0L793.5 256.3L793.1 263.8L785.7 260.4Z" fill="#F08C20" stroke="#F08C20" stroke-width="0.6"/>
<path d="M785.7 260.4L793.1 263.8L792.8 271.2L785.4 267.8Z" fill="#F08C20" stroke="#F08C20" stroke-width="0.6"/>
<path d="M785.4 267.8L792.8 271.2L792.4 278.7L785.1 275.2Z" fill="#F08C20" stroke="#F08C20" stroke-width="0.6"/>
<path d="M785.1 275.2L792.4 278.7L792.0 286.1L784.7 282.7Z" fill="#EA7E1A" stroke="#EA7E1A" stroke-width="0.6"/>
<path d="M784.7 282.7L792.0 286.1L791.6 293.6L784.4 290.1Z" fill="#F08C20" stroke="#F08C20" stroke-width="0.6"/>
<path d="M784.4 290.1L791.6 293.6L791.2 301.0L784.1 297.5Z" fill="#F08C20" stroke="#F08C20" stroke-width="0.6"/>
<path d="M784.1 297.5L791.2 301.0L790.9 308.4L783.7 305.0Z" fill="#F08C20" stroke="#F08C20" stroke-width="0.6"/>
<path d="M795.4 219.1L803.1 222.4L802.7 229.9L795.0 226.6Z" fill="#F7AA2A" stroke="#F7AA2A" stroke-width="0.6"/>
<path d="M795.0 226.6L802.7 229.9L802.2 237.3L794.7 234.0Z" fill="#F7AA2A" stroke="#F7AA2A" stroke-width="0.6"/>
<path d="M794.7 234.0L802.2 237.3L801.8 244.8L794.3 241.5Z" fill="#F7AA2A" stroke="#F7AA2A" stroke-width="0.6"/>
<path d="M794.3 241.5L801.8 244.8L801.4 252.3L793.9 248.9Z" fill="#F49A24" stroke="#F49A24" stroke-width="0.6"/>
<path d="M793.9 248.9L801.4 252.3L801.0 259.7L793.5 256.3Z" fill="#F08C20" stroke="#F08C20" stroke-width="0.6"/>
<path d="M793.5 256.3L801.0 259.7L800.5 267.2L793.1 263.8Z" fill="#EA7E1A" stroke="#EA7E1A" stroke-width="0.6"/>
<path d="M793.1 263.8L800.5 267.2L800.1 274.6L792.8 271.2Z" fill="#EA7E1A" stroke="#EA7E1A" stroke-width="0.6"/>
<path d="M792.8 271.2L800.1 274.6L799.7 282.1L792.4 278.7Z" fill="#EA7E1A" stroke="#EA7E1A" stroke-width="0.6"/>
<path d="M792.4 278.7L799.7 282.1L799.2 289.6L792.0 286.1Z" fill="#EA7E1A" stroke="#EA7E1A" stroke-width="0.6"/>
<path d="M792.0 286.1L799.2 289.6L798.8 297.0L791.6 293.6Z" fill="#EA7E1A" stroke="#EA7E1A" stroke-width="0.6"/>
<path d="M791.6 293.6L798.8 297.0L798.4 304.5L791.2 301.0Z" fill="#F08C20" stroke="#F08C20" stroke-width="0.6"/>
<path d="M791.2 301.0L798.4 304.5L798.0 311.9L790.9 308.4Z" fill="#F49A24" stroke="#F49A24" stroke-width="0.6"/>
<path d="M803.1 222.4L810.8 225.7L810.3 233.2L802.7 229.9Z" fill="#F7AA2A" stroke="#F7AA2A" stroke-width="0.6"/>
<path d="M802.7 229.9L810.3 233.2L809.8 240.7L802.2 237.3Z" fill="#F7AA2A" stroke="#F7AA2A" stroke-width="0.6"/>
<path d="M802.2 237.3L809.8 240.7L809.4 248.2L801.8 244.8Z" fill="#F7AA2A" stroke="#F7AA2A" stroke-width="0.6"/>
<path d="M801.8 244.8L809.4 248.2L808.9 255.6L801.4 252.3Z" fill="#F08C20" stroke="#F08C20" stroke-width="0.6"/>
<path d="M801.4 252.3L808.9 255.6L808.4 263.1L801.0 259.7Z" fill="#EA7E1A" stroke="#EA7E1A" stroke-width="0.6"/>
<path d="M801.0 259.7L808.4 263.1L807.9 270.6L800.5 267.2Z" fill="#EA7E1A" stroke="#EA7E1A" stroke-width="0.6"/>
<path d="M800.5 267.2L807.9 270.6L807.5 278.1L800.1 274.6Z" fill="#EA7E1A" stroke="#EA7E1A" stroke-width="0.6"/>
<path d="M800.1 274.6L807.5 278.1L807.0 285.5L799.7 282.1Z" fill="#EA7E1A" stroke="#EA7E1A" stroke-width="0.6"/>
<path d="M799.7 282.1L807.0 285.5L806.5 293.0L799.2 289.6Z" fill="#EA7E1A" stroke="#EA7E1A" stroke-width="0.6"/>
<path d="M799.2 289.6L806.5 293.0L806.0 300.5L798.8 297.0Z" fill="#EA7E1A" stroke="#EA7E1A" stroke-width="0.6"/>
<path d="M798.8 297.0L806.0 300.5L805.6 307.9L798.4 304.5Z" fill="#F08C20" stroke="#F08C20" stroke-width="0.6"/>
<path d="M798.4 304.5L805.6 307.9L805.1 315.4L798.0 311.9Z" fill="#F49A24" stroke="#F49A24" stroke-width="0.6"/>
<path d="M810.8 225.7L818.5 229.1L817.9 236.5L810.3 233.2Z" fill="#F7AA2A" stroke="#F7AA2A" stroke-width="0.6"/>
<path d="M810.3 233.2L817.9 236.5L817.4 244.0L809.8 240.7Z" fill="#F7AA2A" stroke="#F7AA2A" stroke-width="0.6"/>
<path d="M809.8 240.7L817.4 244.0L816.9 251.5L809.4 248.2Z" fill="#F49A24" stroke="#F49A24" stroke-width="0.6"/>
<path d="M809.4 248.2L816.9 251.5L816.4 259.0L808.9 255.6Z" fill="#F08C20" stroke="#F08C20" stroke-width="0.6"/>
<path d="M808.9 255.6L816.4 259.0L815.8 266.5L808.4 263.1Z" fill="#EA7E1A" stroke="#EA7E1A" stroke-width="0.6"/>
<path d="M808.4 263.1L815.8 266.5L815.3 274.0L807.9 270.6Z" fill="#EA7E1A" stroke="#EA7E1A" stroke-width="0.6"/>
<path d="M807.9 270.6L815.3 274.0L814.8 281.5L807.5 278.1Z" fill="#EA7E1A" stroke="#EA7E1A" stroke-width="0.6"/>
<path d="M807.5 278.1L814.8 281.5L814.3 288.9L807.0 285.5Z" fill="#EA7E1A" stroke="#EA7E1A" stroke-width="0.6"/>
<path d="M807.0 285.5L814.3 288.9L813.8 296.4L806.5 293.0Z" fill="#EA7E1A" stroke="#EA7E1A" stroke-width="0.6"/>
<path d="M806.5 293.0L813.8 296.4L813.2 303.9L806.0 300.5Z" fill="#EA7E1A" stroke="#EA7E1A" stroke-width="0.6"/>
<path d="M806.0 300.5L813.2 303.9L812.7 311.4L805.6 307.9Z" fill="#F08C20" stroke="#F08C20" stroke-width="0.6"/>
<path d="M805.6 307.9L812.7 311.4L812.2 318.9L805.1 315.4Z" fill="#F49A24" stroke="#F49A24" stroke-width="0.6"/>
<path d="M818.5 229.1L826.1 232.4L825.6 239.9L817.9 236.5Z" fill="#F7AA2A" stroke="#F7AA2A" stroke-width="0.6"/>
<path d="M817.9 236.5L825.6 239.9L825.0 247.4L817.4 244.0Z" fill="#F7AA2A" stroke="#F7AA2A" stroke-width="0.6"/>
<path d="M817.4 244.0L825.0 247.4L824.4 254.9L816.9 251.5Z" fill="#F49A24" stroke="#F49A24" stroke-width="0.6"/>
<path d="M816.9 251.5L824.4 254.9L823.9 262.4L816.4 259.0Z" fill="#EA7E1A" stroke="#EA7E1A" stroke-width="0.6"/>
<path d="M816.4 259.0L823.9 262.4L823.3 269.9L815.8 266.5Z" fill="#EA7E1A" stroke="#EA7E1A" stroke-width="0.6"/>
<path d="M815.8 266.5L823.3 269.9L822.7 277.4L815.3 274.0Z" fill="#EA7E1A" stroke="#EA7E1A" stroke-width="0.6"/>
<path d="M815.3 274.0L822.7 277.4L822.2 284.9L814.8 281.5Z" fill="#EA7E1A" stroke="#EA7E1A" stroke-width="0.6"/>
<path d="M814.8 281.5L822.2 284.9L821.6 292.4L814.3 288.9Z" fill="#EA7E1A" stroke="#EA7E1A" stroke-width="0.6"/>
<path d="M814.3 288.9L821.6 292.4L821.0 299.9L813.8 296.4Z" fill="#EA7E1A" stroke="#EA7E1A" stroke-width="0.6"/>
<path d="M813.8 296.4L821.0 299.9L820.5 307.4L813.2 303.9Z" fill="#EA7E1A" stroke="#EA7E1A" stroke-width="0.6"/>
<path d="M813.2 303.9L820.5 307.4L819.9 314.9L812.7 311.4Z" fill="#F08C20" stroke="#F08C20" stroke-width="0.6"/>
<path d="M812.7 311.4L819.9 314.9L819.3 322.4L812.2 318.9Z" fill="#F08C20" stroke="#F08C20" stroke-width="0.6"/>
<path d="M826.1 232.4L833.8 235.7L833.2 243.2L825.6 239.9Z" fill="#F7AA2A" stroke="#F7AA2A" stroke-width="0.6"/>
<path d="M825.6 239.9L833.2 243.2L832.6 250.7L825.0 247.4Z" fill="#F49A24" stroke="#F49A24" stroke-width="0.6"/>
<path d="M825.0 247.4L832.6 250.7L832.0 258.2L824.4 254.9Z" fill="#F08C20" stroke="#F08C20" stroke-width="0.6"/>
<path d="M824.4 254.9L832.0 258.2L831.3 265.7L823.9 262.4Z" fill="#EA7E1A" stroke="#EA7E1A" stroke-width="0.6"/>
<path d="M823.9 262.4L831.3 265.7L830.7 273.2L823.3 269.9Z" fill="#EA7E1A" stroke="#EA7E1A" stroke-width="0.6"/>
<path d="M823.3 269.9L830.7 273.2L830.1 280.8L822.7 277.4Z" fill="#EA7E1A" stroke="#EA7E1A" stroke-width="0.6"/>
<path d="M822.7 277.4L830.1 280.8L829.5 288.3L822.2 284.9Z" fill="#EA7E1A" stroke="#EA7E1A" stroke-width="0.6"/>
<path d="M822.2 284.9L829.5 288.3L828.9 295.8L821.6 292.4Z" fill="#EA7E1A" stroke="#EA7E1A" stroke-width="0.6"/>
<path d="M821.6 292.4L828.9 295.8L828.3 303.3L821.0 299.9Z" fill="#EA7E1A" stroke="#EA7E1A" stroke-width="0.6"/>
<path d="M821.0 299.9L828.3 303.3L827.7 310.8L820.5 307.4Z" fill="#F08C20" stroke="#F08C20" stroke-width="0.6"/>
<path d="M820.5 307.4L827.7 310.8L827.0 318.4L819.9 314.9Z" fill="#F08C20" stroke="#F08C20" stroke-width="0.6"/>
<path d="M819.9 314.9L827.0 318.4L826.4 325.9L819.3 322.4Z" fill="#F08C20" stroke="#F08C20" stroke-width="0.6"/>
<path d="M833.8 235.7L841.5 239.0L840.8 246.5L833.2 243.2Z" fill="#F49A24" stroke="#F49A24" stroke-width="0.6"/>
<path d="M833.2 243.2L840.8 246.5L840.2 254.0L832.6 250.7Z" fill="#F08C20" stroke="#F08C20" stroke-width="0.6"/>
<path d="M832.6 250.7L840.2 254.0L839.5 261.6L832.0 258.2Z" fill="#F08C20" stroke="#F08C20" stroke-width="0.6"/>
<path d="M832.0 258.2L839.5 261.6L838.8 269.1L831.3 265.7Z" fill="#EA7E1A" stroke="#EA7E1A" stroke-width="0.6"/>
<path d="M831.3 265.7L838.8 269.1L838.2 276.6L830.7 273.2Z" fill="#EA7E1A" stroke="#EA7E1A" stroke-width="0.6"/>
<path d="M830.7 273.2L838.2 276.6L837.5 284.2L830.1 280.8Z" fill="#F08C20" stroke="#F08C20" stroke-width="0.6"/>
<path d="M830.1 280.8L837.5 284.2L836.9 291.7L829.5 288.3Z" fill="#F08C20" stroke="#F08C20" stroke-width="0.6"/>
<path d="M829.5 288.3L836.9 291.7L836.2 299.2L828.9 295.8Z" fill="#F08C20" stroke="#F08C20" stroke-width="0.6"/>
<path d="M828.9 295.8L836.2 299.2L835.5 306.8L828.3 303.3Z" fill="#F08C20" stroke="#F08C20" stroke-width="0.6"/>
<path d="M828.3 303.3L835.5 306.8L834.9 314.3L827.7 310.8Z" fill="#F08C20" stroke="#F08C20" stroke-width="0.6"/>
<path d="M827.7 310.8L834.9 314.3L834.2 321.8L827.0 318.4Z" fill="#EA7E1A" stroke="#EA7E1A" stroke-width="0.6"/>
<path d="M827.0 318.4L834.2 321.8L833.5 329.4L826.4 325.9Z" fill="#EA7E1A" stroke="#EA7E1A" stroke-width="0.6"/>
<path d="M841.5 239.0L849.1 242.3L848.4 249.8L840.8 246.5Z" fill="#F08C20" stroke="#F08C20" stroke-width="0.6"/>
<path d="M840.8 246.5L848.4 249.8L847.7 257.4L840.2 254.0Z" fill="#F08C20" stroke="#F08C20" stroke-width="0.6"/>
<path d="M840.2 254.0L847.7 257.4L847.0 264.9L839.5 261.6Z" fill="#F08C20" stroke="#F08C20" stroke-width="0.6"/>
<path d="M839.5 261.6L847.0 264.9L846.3 272.5L838.8 269.1Z" fill="#F08C20" stroke="#F08C20" stroke-width="0.6"/>
<path d="M838.8 269.1L846.3 272.5L845.6 280.0L838.2 276.6Z" fill="#F08C20" stroke="#F08C20" stroke-width="0.6"/>
<path d="M838.2 276.6L845.6 280.0L844.9 287.6L837.5 284.2Z" fill="#F49A24" stroke="#F49A24" stroke-width="0.6"/>
<path d="M837.5 284.2L844.9 287.6L844.2 295.1L836.9 291.7Z" fill="#F49A24" stroke="#F49A24" stroke-width="0.6"/>
<path d="M836.9 291.7L844.2 295.1L843.5 302.7L836.2 299.2Z" fill="#F49A24" stroke="#F49A24" stroke-width="0.6"/>
<path d="M836.2 299.2L843.5 302.7L842.8 310.2L835.5 306.8Z" fill="#F08C20" stroke="#F08C20" stroke-width="0.6"/>
<path d="M835.5 306.8L842.8 310.2L842.1 317.7L834.9 314.3Z" fill="#F08C20" stroke="#F08C20" stroke-width="0.6"/>
<path d="M834.9 314.3L842.1 317.7L841.4 325.3L834.2 321.8Z" fill="#EA7E1A" stroke="#EA7E1A" stroke-width="0.6"/>
<path d="M834.2 321.8L841.4 325.3L840.7 332.8L833.5 329.4Z" fill="#EA7E1A" stroke="#EA7E1A" stroke-width="0.6"/>
<path d="M849.1 242.3L856.8 245.6L856.1 253.2L848.4 249.8Z" fill="#EA7E1A" stroke="#EA7E1A" stroke-width="0.6"/>
<path d="M848.4 249.8L856.1 253.2L855.3 260.7L847.7 257.4Z" fill="#EA7E1A" stroke="#EA7E1A" stroke-width="0.6"/>
<path d="M847.7 257.4L855.3 260.7L854.6 268.3L847.0 264.9Z" fill="#F08C20" stroke="#F08C20" stroke-width="0.6"/>
<path d="M847.0 264.9L854.6 268.3L853.8 275.8L846.3 272.5Z" fill="#F08C20" stroke="#F08C20" stroke-width="0.6"/>
<path d="M846.3 272.5L853.8 275.8L853.1 283.4L845.6 280.0Z" fill="#F49A24" stroke="#F49A24" stroke-width="0.6"/>
<path d="M845.6 280.0L853.1 283.4L852.3 291.0L844.9 287.6Z" fill="#F49A24" stroke="#F49A24" stroke-width="0.6"/>
<path d="M844.9 287.6L852.3 291.0L851.6 298.5L844.2 295.1Z" fill="#F7AA2A" stroke="#F7AA2A" stroke-width="0.6"/>
<path d="M844.2 295.1L851.6 298.5L850.8 306.1L843.5 302.7Z" fill="#F49A24" stroke="#F49A24" stroke-width="0.6"/>
<path d="M843.5 302.7L850.8 306.1L850.0 313.6L842.8 310.2Z" fill="#F49A24" stroke="#F49A24" stroke-width="0.6"/>
<path d="M842.8 310.2L850.0 313.6L849.3 321.2L842.1 317.7Z" fill="#F08C20" stroke="#F08C20" stroke-width="0.6"/>
<path d="M842.1 317.7L849.3 321.2L848.5 328.8L841.4 325.3Z" fill="#F08C20" stroke="#F08C20" stroke-width="0.6"/>
<path d="M841.4 325.3L848.5 328.8L847.8 336.3L840.7 332.8Z" fill="#EA7E1A" stroke="#EA7E1A" stroke-width="0.6"/>
<path d="M856.8 245.6L864.5 248.9L863.7 256.5L856.1 253.2Z" fill="#EA7E1A" stroke="#EA7E1A" stroke-width="0.6"/>
<path d="M856.1 253.2L863.7 256.5L862.9 264.1L855.3 260.7Z" fill="#EA7E1A" stroke="#EA7E1A" stroke-width="0.6"/>
<path d="M855.3 260.7L862.9 264.1L862.1 271.6L854.6 268.3Z" fill="#F08C20" stroke="#F08C20" stroke-width="0.6"/>
<path d="M854.6 268.3L862.1 271.6L861.3 279.2L853.8 275.8Z" fill="#F49A24" stroke="#F49A24" stroke-width="0.6"/>
<path d="M853.8 275.8L861.3 279.2L860.5 286.8L853.1 283.4Z" fill="#F7AA2A" stroke="#F7AA2A" stroke-width="0.6"/>
<path d="M853.1 283.4L860.5 286.8L859.7 294.4L852.3 291.0Z" fill="#F7AA2A" stroke="#F7AA2A" stroke-width="0.6"/>
<path d="M852.3 291.0L859.7 294.4L858.9 301.9L851.6 298.5Z" fill="#F7AA2A" stroke="#F7AA2A" stroke-width="0.6"/>
<path d="M851.6 298.5L858.9 301.9L858.1 309.5L850.8 306.1Z" fill="#F49A24" stroke="#F49A24" stroke-width="0.6"/>
<path d="M850.8 306.1L858.1 309.5L857.3 317.1L850.0 313.6Z" fill="#F49A24" stroke="#F49A24" stroke-width="0.6"/>
<path d="M850.0 313.6L857.3 317.1L856.5 324.7L849.3 321.2Z" fill="#F08C20" stroke="#F08C20" stroke-width="0.6"/>
<path d="M849.3 321.2L856.5 324.7L855.7 332.2L848.5 328.8Z" fill="#F08C20" stroke="#F08C20" stroke-width="0.6"/>
<path d="M848.5 328.8L855.7 332.2L854.9 339.8L847.8 336.3Z" fill="#F08C20" stroke="#F08C20" stroke-width="0.6"/>
<path d="M780.1 212.5L776.6 301.5M787.8 215.8L783.7 305.0M795.4 219.1L790.9 308.4M803.1 222.4L798.0 311.9M810.8 225.7L805.1 315.4M818.5 229.1L812.2 318.9M826.1 232.4L819.3 322.4M833.8 235.7L826.4 325.9M841.5 239.0L833.5 329.4M849.1 242.3L840.7 332.8M856.8 245.6L847.8 336.3M772.2 216.6L863.7 256.5M771.9 224.0L862.9 264.1M771.7 231.4L862.1 271.6M771.4 238.8L861.3 279.2M771.2 246.2L860.5 286.8M771.0 253.6L859.7 294.4M770.7 261.0L858.9 301.9M770.5 268.4L858.1 309.5M770.2 275.8L857.3 317.1M770.0 283.2L856.5 324.7M769.7 290.6L855.7 332.2" stroke="#1E0E00" stroke-width="1.0" fill="none"/>
<path d="M772.4 209.2L864.5 248.9L854.9 339.8L769.5 298.0Z" stroke="#140900" stroke-width="1.3" fill="none" stroke-linejoin="round"/>
<path d="M597.5 395.0L596.7 410.6M604.6 400.3L603.8 415.9M611.7 405.6L610.9 421.2M618.8 410.9L618.0 426.5M625.8 416.1L625.0 431.7M632.9 421.4L632.1 437.0M640.0 426.7L639.2 442.3M647.1 432.0L646.3 447.6M654.2 437.3L653.4 452.9M661.2 442.5L660.5 458.1M668.3 447.8L667.5 463.4M675.4 453.1L674.6 468.7M682.5 458.4L681.7 474.0" stroke="#5CD65C" stroke-width="1" fill="none"/><path d="M591.0 410.6L605.5 410.6M597.5 406.0L604.5 406.0M598.1 415.9L612.6 415.9M604.6 411.3L611.6 411.3M605.2 421.2L619.7 421.2M611.7 416.6L618.7 416.6M612.2 426.5L626.8 426.5M618.8 421.9L625.8 421.9M619.3 431.7L633.8 431.7M625.8 427.1L632.8 427.1M626.4 437.0L640.9 437.0M632.9 432.4L639.9 432.4M633.5 442.3L648.0 442.3M640.0 437.7L647.0 437.7M640.6 447.6L655.1 447.6M647.1 443.0L654.1 443.0M647.7 452.9L662.2 452.9M654.2 448.3L661.2 448.3M654.8 458.1L669.2 458.1M661.2 453.5L668.2 453.5M661.8 463.4L676.3 463.4M668.3 458.8L675.3 458.8M668.9 468.7L683.4 468.7M675.4 464.1L682.4 464.1M676.0 474.0L690.5 474.0M682.5 469.4L689.5 469.4" stroke="#2AD82A" stroke-width="1.15" fill="none"/><path d="M591.5 399.0L593.6 398.9L595.6 401.9L597.7 405.0L599.8 404.9L601.8 404.7L603.9 407.8L605.9 410.9L608.0 410.7L610.1 410.6L612.1 413.7L614.2 416.7L616.2 416.6L618.3 416.5L620.4 419.5L622.4 422.6L624.5 422.5L626.6 422.3L628.6 425.4L630.7 428.5L632.8 428.3L634.8 428.2L636.9 431.3L638.9 434.3L641.0 434.2L643.1 434.1L645.1 437.1L647.2 440.2L649.2 440.1L651.3 439.9L653.4 443.0L655.4 446.1L657.5 445.9L659.6 445.8L661.6 448.9L663.7 451.9L665.8 451.8L667.8 451.7L669.9 454.7L671.9 457.8L674.0 457.7L676.1 457.5L678.1 460.6L680.2 463.7L682.2 463.5L684.3 463.4L686.4 466.5L688.4 469.5L690.5 469.4" stroke="#2AD82A" stroke-width="1.2" fill="none"/>
<path d="M585.2 297.3L592.9 302.2L593.9 310.4L586.2 305.4Z" fill="#F49A24" stroke="#F49A24" stroke-width="0.6"/>
<path d="M586.2 305.4L593.9 310.4L594.9 318.6L587.2 313.6Z" fill="#F49A24" stroke="#F49A24" stroke-width="0.6"/>
<path d="M587.2 313.6L594.9 318.6L595.8 326.7L588.3 321.7Z" fill="#F49A24" stroke="#F49A24" stroke-width="0.6"/>
<path d="M588.3 321.7L595.8 326.7L596.8 334.9L589.3 329.9Z" fill="#F08C20" stroke="#F08C20" stroke-width="0.6"/>
<path d="M589.3 329.9L596.8 334.9L597.8 343.1L590.3 338.0Z" fill="#F08C20" stroke="#F08C20" stroke-width="0.6"/>
<path d="M590.3 338.0L597.8 343.1L598.8 351.2L591.4 346.1Z" fill="#EA7E1A" stroke="#EA7E1A" stroke-width="0.6"/>
<path d="M591.4 346.1L598.8 351.2L599.7 359.4L592.4 354.3Z" fill="#EA7E1A" stroke="#EA7E1A" stroke-width="0.6"/>
<path d="M592.4 354.3L599.7 359.4L600.7 367.6L593.4 362.4Z" fill="#EA7E1A" stroke="#EA7E1A" stroke-width="0.6"/>
<path d="M593.4 362.4L600.7 367.6L601.7 375.8L594.4 370.6Z" fill="#F08C20" stroke="#F08C20" stroke-width="0.6"/>
<path d="M594.4 370.6L601.7 375.8L602.6 383.9L595.5 378.7Z" fill="#F08C20" stroke="#F08C20" stroke-width="0.6"/>
<path d="M595.5 378.7L602.6 383.9L603.6 392.1L596.5 386.9Z" fill="#F49A24" stroke="#F49A24" stroke-width="0.6"/>
<path d="M596.5 386.9L603.6 392.1L604.6 400.3L597.5 395.0Z" fill="#F49A24" stroke="#F49A24" stroke-width="0.6"/>
<path d="M592.9 302.2L600.6 307.1L601.6 315.3L593.9 310.4Z" fill="#F49A24" stroke="#F49A24" stroke-width="0.6"/>
<path d="M593.9 310.4L601.6 315.3L602.5 323.5L594.9 318.6Z" fill="#F08C20" stroke="#F08C20" stroke-width="0.6"/>
<path d="M594.9 318.6L602.5 323.5L603.4 331.7L595.8 326.7Z" fill="#EA7E1A" stroke="#EA7E1A" stroke-width="0.6"/>
<path d="M595.8 326.7L603.4 331.7L604.3 339.9L596.8 334.9Z" fill="#EA7E1A" stroke="#EA7E1A" stroke-width="0.6"/>
<path d="M596.8 334.9L604.3 339.9L605.2 348.1L597.8 343.1Z" fill="#EA7E1A" stroke="#EA7E1A" stroke-width="0.6"/>
<path d="M597.8 343.1L605.2 348.1L606.1 356.3L598.8 351.2Z" fill="#EA7E1A" stroke="#EA7E1A" stroke-width="0.6"/>
<path d="M598.8 351.2L606.1 356.3L607.1 364.5L599.7 359.4Z" fill="#EA7E1A" stroke="#EA7E1A" stroke-width="0.6"/>
<path d="M599.7 359.4L607.1 364.5L608.0 372.8L600.7 367.6Z" fill="#F08C20" stroke="#F08C20" stroke-width="0.6"/>
<path d="M600.7 367.6L608.0 372.8L608.9 381.0L601.7 375.8Z" fill="#F49A24" stroke="#F49A24" stroke-width="0.6"/>
<path d="M601.7 375.8L608.9 381.0L609.8 389.2L602.6 383.9Z" fill="#F7AA2A" stroke="#F7AA2A" stroke-width="0.6"/>
<path d="M602.6 383.9L609.8 389.2L610.7 397.4L603.6 392.1Z" fill="#F7AA2A" stroke="#F7AA2A" stroke-width="0.6"/>
<path d="M603.6 392.1L610.7 397.4L611.7 405.6L604.6 400.3Z" fill="#F7AA2A" stroke="#F7AA2A" stroke-width="0.6"/>
<path d="M600.6 307.1L608.4 312.0L609.2 320.3L601.6 315.3Z" fill="#F08C20" stroke="#F08C20" stroke-width="0.6"/>
<path d="M601.6 315.3L609.2 320.3L610.1 328.5L602.5 323.5Z" fill="#EA7E1A" stroke="#EA7E1A" stroke-width="0.6"/>
<path d="M602.5 323.5L610.1 328.5L611.0 336.7L603.4 331.7Z" fill="#EA7E1A" stroke="#EA7E1A" stroke-width="0.6"/>
<path d="M603.4 331.7L611.0 336.7L611.8 345.0L604.3 339.9Z" fill="#EA7E1A" stroke="#EA7E1A" stroke-width="0.6"/>
<path d="M604.3 339.9L611.8 345.0L612.7 353.2L605.2 348.1Z" fill="#EA7E1A" stroke="#EA7E1A" stroke-width="0.6"/>
<path d="M605.2 348.1L612.7 353.2L613.5 361.4L606.1 356.3Z" fill="#EA7E1A" stroke="#EA7E1A" stroke-width="0.6"/>
<path d="M606.1 356.3L613.5 361.4L614.4 369.7L607.1 364.5Z" fill="#EA7E1A" stroke="#EA7E1A" stroke-width="0.6"/>
<path d="M607.1 364.5L614.4 369.7L615.3 377.9L608.0 372.8Z" fill="#F08C20" stroke="#F08C20" stroke-width="0.6"/>
<path d="M608.0 372.8L615.3 377.9L616.1 386.1L608.9 381.0Z" fill="#F49A24" stroke="#F49A24" stroke-width="0.6"/>
<path d="M608.9 381.0L616.1 386.1L617.0 394.4L609.8 389.2Z" fill="#F7AA2A" stroke="#F7AA2A" stroke-width="0.6"/>
<path d="M609.8 389.2L617.0 394.4L617.9 402.6L610.7 397.4Z" fill="#F7AA2A" stroke="#F7AA2A" stroke-width="0.6"/>
<path d="M610.7 397.4L617.9 402.6L618.8 410.9L611.7 405.6Z" fill="#F7AA2A" stroke="#F7AA2A" stroke-width="0.6"/>
<path d="M608.4 312.0L616.1 316.9L616.9 325.2L609.2 320.3Z" fill="#EA7E1A" stroke="#EA7E1A" stroke-width="0.6"/>
<path d="M609.2 320.3L616.9 325.2L617.7 333.5L610.1 328.5Z" fill="#EA7E1A" stroke="#EA7E1A" stroke-width="0.6"/>
<path d="M610.1 328.5L617.7 333.5L618.5 341.7L611.0 336.7Z" fill="#EA7E1A" stroke="#EA7E1A" stroke-width="0.6"/>
<path d="M611.0 336.7L618.5 341.7L619.3 350.0L611.8 345.0Z" fill="#EA7E1A" stroke="#EA7E1A" stroke-width="0.6"/>
<path d="M611.8 345.0L619.3 350.0L620.1 358.3L612.7 353.2Z" fill="#EA7E1A" stroke="#EA7E1A" stroke-width="0.6"/>
<path d="M612.7 353.2L620.1 358.3L621.0 366.5L613.5 361.4Z" fill="#EA7E1A" stroke="#EA7E1A" stroke-width="0.6"/>
<path d="M613.5 361.4L621.0 366.5L621.8 374.8L614.4 369.7Z" fill="#F08C20" stroke="#F08C20" stroke-width="0.6"/>
<path d="M614.4 369.7L621.8 374.8L622.6 383.1L615.3 377.9Z" fill="#F49A24" stroke="#F49A24" stroke-width="0.6"/>
<path d="M615.3 377.9L622.6 383.1L623.4 391.3L616.1 386.1Z" fill="#F7AA2A" stroke="#F7AA2A" stroke-width="0.6"/>
<path d="M616.1 386.1L623.4 391.3L624.2 399.6L617.0 394.4Z" fill="#F7AA2A" stroke="#F7AA2A" stroke-width="0.6"/>
<path d="M617.0 394.4L624.2 399.6L625.0 407.9L617.9 402.6Z" fill="#F7AA2A" stroke="#F7AA2A" stroke-width="0.6"/>
<path d="M617.9 402.6L625.0 407.9L625.8 416.1L618.8 410.9Z" fill="#F7AA2A" stroke="#F7AA2A" stroke-width="0.6"/>
<path d="M616.1 316.9L623.8 321.8L624.5 330.1L616.9 325.2Z" fill="#EA7E1A" stroke="#EA7E1A" stroke-width="0.6"/>
<path d="M616.9 325.2L624.5 330.1L625.3 338.4L617.7 333.5Z" fill="#EA7E1A" stroke="#EA7E1A" stroke-width="0.6"/>
<path d="M617.7 333.5L625.3 338.4L626.1 346.7L618.5 341.7Z" fill="#EA7E1A" stroke="#EA7E1A" stroke-width="0.6"/>
<path d="M618.5 341.7L626.1 346.7L626.8 355.0L619.3 350.0Z" fill="#EA7E1A" stroke="#EA7E1A" stroke-width="0.6"/>
<path d="M619.3 350.0L626.8 355.0L627.6 363.3L620.1 358.3Z" fill="#EA7E1A" stroke="#EA7E1A" stroke-width="0.6"/>
<path d="M620.1 358.3L627.6 363.3L628.3 371.6L621.0 366.5Z" fill="#EA7E1A" stroke="#EA7E1A" stroke-width="0.6"/>
<path d="M621.0 366.5L628.3 371.6L629.1 379.9L621.8 374.8Z" fill="#F08C20" stroke="#F08C20" stroke-width="0.6"/>
<path d="M621.8 374.8L629.1 379.9L629.9 388.2L622.6 383.1Z" fill="#F49A24" stroke="#F49A24" stroke-width="0.6"/>
<path d="M622.6 383.1L629.9 388.2L630.6 396.5L623.4 391.3Z" fill="#F7AA2A" stroke="#F7AA2A" stroke-width="0.6"/>
<path d="M623.4 391.3L630.6 396.5L631.4 404.8L624.2 399.6Z" fill="#F7AA2A" stroke="#F7AA2A" stroke-width="0.6"/>
<path d="M624.2 399.6L631.4 404.8L632.2 413.1L625.0 407.9Z" fill="#F7AA2A" stroke="#F7AA2A" stroke-width="0.6"/>
<path d="M625.0 407.9L632.2 413.1L632.9 421.4L625.8 416.1Z" fill="#F7AA2A" stroke="#F7AA2A" stroke-width="0.6"/>
<path d="M623.8 321.8L631.5 326.8L632.2 335.1L624.5 330.1Z" fill="#EA7E1A" stroke="#EA7E1A" stroke-width="0.6"/>
<path d="M624.5 330.1L632.2 335.1L632.9 343.4L625.3 338.4Z" fill="#EA7E1A" stroke="#EA7E1A" stroke-width="0.6"/>
<path d="M625.3 338.4L632.9 343.4L633.6 351.7L626.1 346.7Z" fill="#EA7E1A" stroke="#EA7E1A" stroke-width="0.6"/>
<path d="M626.1 346.7L633.6 351.7L634.3 360.1L626.8 355.0Z" fill="#EA7E1A" stroke="#EA7E1A" stroke-width="0.6"/>
<path d="M626.8 355.0L634.3 360.1L635.0 368.4L627.6 363.3Z" fill="#EA7E1A" stroke="#EA7E1A" stroke-width="0.6"/>
<path d="M627.6 363.3L635.0 368.4L635.8 376.7L628.3 371.6Z" fill="#F08C20" stroke="#F08C20" stroke-width="0.6"/>
<path d="M628.3 371.6L635.8 376.7L636.5 385.1L629.1 379.9Z" fill="#F49A24" stroke="#F49A24" stroke-width="0.6"/>
<path d="M629.1 379.9L636.5 385.1L637.2 393.4L629.9 388.2Z" fill="#F49A24" stroke="#F49A24" stroke-width="0.6"/>
<path d="M629.9 388.2L637.2 393.4L637.9 401.7L630.6 396.5Z" fill="#F49A24" stroke="#F49A24" stroke-width="0.6"/>
<path d="M630.6 396.5L637.9 401.7L638.6 410.0L631.4 404.8Z" fill="#F49A24" stroke="#F49A24" stroke-width="0.6"/>
<path d="M631.4 404.8L638.6 410.0L639.3 418.4L632.2 413.1Z" fill="#F49A24" stroke="#F49A24" stroke-width="0.6"/>
<path d="M632.2 413.1L639.3 418.4L640.0 426.7L632.9 421.4Z" fill="#F49A24" stroke="#F49A24" stroke-width="0.6"/>
<path d="M631.5 326.8L639.2 331.7L639.9 340.0L632.2 335.1Z" fill="#EA7E1A" stroke="#EA7E1A" stroke-width="0.6"/>
<path d="M632.2 335.1L639.9 340.0L640.5 348.4L632.9 343.4Z" fill="#EA7E1A" stroke="#EA7E1A" stroke-width="0.6"/>
<path d="M632.9 343.4L640.5 348.4L641.2 356.7L633.6 351.7Z" fill="#EA7E1A" stroke="#EA7E1A" stroke-width="0.6"/>
<path d="M633.6 351.7L641.2 356.7L641.8 365.1L634.3 360.1Z" fill="#EA7E1A" stroke="#EA7E1A" stroke-width="0.6"/>
<path d="M634.3 360.1L641.8 365.1L642.5 373.5L635.0 368.4Z" fill="#F08C20" stroke="#F08C20" stroke-width="0.6"/>
<path d="M635.0 368.4L642.5 373.5L643.2 381.8L635.8 376.7Z" fill="#F08C20" stroke="#F08C20" stroke-width="0.6"/>
<path d="M635.8 376.7L643.2 381.8L643.8 390.2L636.5 385.1Z" fill="#F49A24" stroke="#F49A24" stroke-width="0.6"/>
<path d="M636.5 385.1L643.8 390.2L644.5 398.5L637.2 393.4Z" fill="#F49A24" stroke="#F49A24" stroke-width="0.6"/>
<path d="M637.2 393.4L644.5 398.5L645.1 406.9L637.9 401.7Z" fill="#F49A24" stroke="#F49A24" stroke-width="0.6"/>
<path d="M637.9 401.7L645.1 406.9L645.8 415.3L638.6 410.0Z" fill="#F08C20" stroke="#F08C20" stroke-width="0.6"/>
<path d="M638.6 410.0L645.8 415.3L646.4 423.6L639.3 418.4Z" fill="#F08C20" stroke="#F08C20" stroke-width="0.6"/>
<path d="M639.3 418.4L646.4 423.6L647.1 432.0L640.0 426.7Z" fill="#F08C20" stroke="#F08C20" stroke-width="0.6"/>
<path d="M639.2 331.7L646.9 336.6L647.5 345.0L639.9 340.0Z" fill="#EA7E1A" stroke="#EA7E1A" stroke-width="0.6"/>
<path d="M639.9 340.0L647.5 345.0L648.1 353.4L640.5 348.4Z" fill="#F08C20" stroke="#F08C20" stroke-width="0.6"/>
<path d="M640.5 348.4L648.1 353.4L648.7 361.7L641.2 356.7Z" fill="#F08C20" stroke="#F08C20" stroke-width="0.6"/>
<path d="M641.2 356.7L648.7 361.7L649.3 370.1L641.8 365.1Z" fill="#F49A24" stroke="#F49A24" stroke-width="0.6"/>
<path d="M641.8 365.1L649.3 370.1L649.9 378.5L642.5 373.5Z" fill="#F49A24" stroke="#F49A24" stroke-width="0.6"/>
<path d="M642.5 373.5L649.9 378.5L650.5 386.9L643.2 381.8Z" fill="#F49A24" stroke="#F49A24" stroke-width="0.6"/>
<path d="M643.2 381.8L650.5 386.9L651.2 395.3L643.8 390.2Z" fill="#F49A24" stroke="#F49A24" stroke-width="0.6"/>
<path d="M643.8 390.2L651.2 395.3L651.8 403.7L644.5 398.5Z" fill="#F08C20" stroke="#F08C20" stroke-width="0.6"/>
<path d="M644.5 398.5L651.8 403.7L652.4 412.1L645.1 406.9Z" fill="#F08C20" stroke="#F08C20" stroke-width="0.6"/>
<path d="M645.1 406.9L652.4 412.1L653.0 420.5L645.8 415.3Z" fill="#EA7E1A" stroke="#EA7E1A" stroke-width="0.6"/>
<path d="M645.8 415.3L653.0 420.5L653.6 428.9L646.4 423.6Z" fill="#EA7E1A" stroke="#EA7E1A" stroke-width="0.6"/>
<path d="M646.4 423.6L653.6 428.9L654.2 437.3L647.1 432.0Z" fill="#F08C20" stroke="#F08C20" stroke-width="0.6"/>
<path d="M646.9 336.6L654.6 341.5L655.2 349.9L647.5 345.0Z" fill="#F08C20" stroke="#F08C20" stroke-width="0.6"/>
<path d="M647.5 345.0L655.2 349.9L655.8 358.3L648.1 353.4Z" fill="#F49A24" stroke="#F49A24" stroke-width="0.6"/>
<path d="M648.1 353.4L655.8 358.3L656.3 366.7L648.7 361.7Z" fill="#F7AA2A" stroke="#F7AA2A" stroke-width="0.6"/>
<path d="M648.7 361.7L656.3 366.7L656.9 375.2L649.3 370.1Z" fill="#F7AA2A" stroke="#F7AA2A" stroke-width="0.6"/>
<path d="M649.3 370.1L656.9 375.2L657.4 383.6L649.9 378.5Z" fill="#F7AA2A" stroke="#F7AA2A" stroke-width="0.6"/>
<path d="M649.9 378.5L657.4 383.6L658.0 392.0L650.5 386.9Z" fill="#F49A24" stroke="#F49A24" stroke-width="0.6"/>
<path d="M650.5 386.9L658.0 392.0L658.5 400.4L651.2 395.3Z" fill="#F49A24" stroke="#F49A24" stroke-width="0.6"/>
<path d="M651.2 395.3L658.5 400.4L659.0 408.9L651.8 403.7Z" fill="#F08C20" stroke="#F08C20" stroke-width="0.6"/>
<path d="M651.8 403.7L659.0 408.9L659.6 417.3L652.4 412.1Z" fill="#EA7E1A" stroke="#EA7E1A" stroke-width="0.6"/>
<path d="M652.4 412.1L659.6 417.3L660.1 425.7L653.0 420.5Z" fill="#EA7E1A" stroke="#EA7E1A" stroke-width="0.6"/>
<path d="M653.0 420.5L660.1 425.7L660.7 434.1L653.6 428.9Z" fill="#EA7E1A" stroke="#EA7E1A" stroke-width="0.6"/>
<path d="M653.6 428.9L660.7 434.1L661.2 442.5L654.2 437.3Z" fill="#EA7E1A" stroke="#EA7E1A" stroke-width="0.6"/>
<path d="M654.6 341.5L662.4 346.4L662.9 354.8L655.2 349.9Z" fill="#F49A24" stroke="#F49A24" stroke-width="0.6"/>
<path d="M655.2 349.9L662.9 354.8L663.4 363.3L655.8 358.3Z" fill="#F7AA2A" stroke="#F7AA2A" stroke-width="0.6"/>
<path d="M655.8 358.3L663.4 363.3L663.9 371.7L656.3 366.7Z" fill="#F7AA2A" stroke="#F7AA2A" stroke-width="0.6"/>
<path d="M656.3 366.7L663.9 371.7L664.4 380.2L656.9 375.2Z" fill="#F7AA2A" stroke="#F7AA2A" stroke-width="0.6"/>
<path d="M656.9 375.2L664.4 380.2L664.9 388.7L657.4 383.6Z" fill="#F7AA2A" stroke="#F7AA2A" stroke-width="0.6"/>
<path d="M657.4 383.6L664.9 388.7L665.4 397.1L658.0 392.0Z" fill="#F49A24" stroke="#F49A24" stroke-width="0.6"/>
<path d="M658.0 392.0L665.4 397.1L665.8 405.6L658.5 400.4Z" fill="#F08C20" stroke="#F08C20" stroke-width="0.6"/>
<path d="M658.5 400.4L665.8 405.6L666.3 414.0L659.0 408.9Z" fill="#EA7E1A" stroke="#EA7E1A" stroke-width="0.6"/>
<path d="M659.0 408.9L666.3 414.0L666.8 422.5L659.6 417.3Z" fill="#EA7E1A" stroke="#EA7E1A" stroke-width="0.6"/>
<path d="M659.6 417.3L666.8 422.5L667.3 430.9L660.1 425.7Z" fill="#EA7E1A" stroke="#EA7E1A" stroke-width="0.6"/>
<path d="M660.1 425.7L667.3 430.9L667.8 439.4L660.7 434.1Z" fill="#EA7E1A" stroke="#EA7E1A" stroke-width="0.6"/>
<path d="M660.7 434.1L667.8 439.4L668.3 447.8L661.2 442.5Z" fill="#EA7E1A" stroke="#EA7E1A" stroke-width="0.6"/>
<path d="M662.4 346.4L670.1 351.3L670.5 359.8L662.9 354.8Z" fill="#F7AA2A" stroke="#F7AA2A" stroke-width="0.6"/>
<path d="M662.9 354.8L670.5 359.8L671.0 368.3L663.4 363.3Z" fill="#F7AA2A" stroke="#F7AA2A" stroke-width="0.6"/>
<path d="M663.4 363.3L671.0 368.3L671.4 376.7L663.9 371.7Z" fill="#F7AA2A" stroke="#F7AA2A" stroke-width="0.6"/>
<path d="M663.9 371.7L671.4 376.7L671.9 385.2L664.4 380.2Z" fill="#F7AA2A" stroke="#F7AA2A" stroke-width="0.6"/>
<path d="M664.4 380.2L671.9 385.2L672.3 393.7L664.9 388.7Z" fill="#F7AA2A" stroke="#F7AA2A" stroke-width="0.6"/>
<path d="M664.9 388.7L672.3 393.7L672.8 402.2L665.4 397.1Z" fill="#F49A24" stroke="#F49A24" stroke-width="0.6"/>
<path d="M665.4 397.1L672.8 402.2L673.2 410.7L665.8 405.6Z" fill="#F08C20" stroke="#F08C20" stroke-width="0.6"/>
<path d="M665.8 405.6L673.2 410.7L673.6 419.2L666.3 414.0Z" fill="#EA7E1A" stroke="#EA7E1A" stroke-width="0.6"/>
<path d="M666.3 414.0L673.6 419.2L674.1 427.7L666.8 422.5Z" fill="#EA7E1A" stroke="#EA7E1A" stroke-width="0.6"/>
<path d="M666.8 422.5L674.1 427.7L674.5 436.1L667.3 430.9Z" fill="#EA7E1A" stroke="#EA7E1A" stroke-width="0.6"/>
<path d="M667.3 430.9L674.5 436.1L675.0 444.6L667.8 439.4Z" fill="#EA7E1A" stroke="#EA7E1A" stroke-width="0.6"/>
<path d="M667.8 439.4L675.0 444.6L675.4 453.1L668.3 447.8Z" fill="#EA7E1A" stroke="#EA7E1A" stroke-width="0.6"/>
<path d="M670.1 351.3L677.8 356.2L678.2 364.7L670.5 359.8Z" fill="#F7AA2A" stroke="#F7AA2A" stroke-width="0.6"/>
<path d="M670.5 359.8L678.2 364.7L678.6 373.2L671.0 368.3Z" fill="#F7AA2A" stroke="#F7AA2A" stroke-width="0.6"/>
<path d="M671.0 368.3L678.6 373.2L679.0 381.8L671.4 376.7Z" fill="#F7AA2A" stroke="#F7AA2A" stroke-width="0.6"/>
<path d="M671.4 376.7L679.0 381.8L679.4 390.3L671.9 385.2Z" fill="#F7AA2A" stroke="#F7AA2A" stroke-width="0.6"/>
<path d="M671.9 385.2L679.4 390.3L679.8 398.8L672.3 393.7Z" fill="#F7AA2A" stroke="#F7AA2A" stroke-width="0.6"/>
<path d="M672.3 393.7L679.8 398.8L680.1 407.3L672.8 402.2Z" fill="#F49A24" stroke="#F49A24" stroke-width="0.6"/>
<path d="M672.8 402.2L680.1 407.3L680.5 415.8L673.2 410.7Z" fill="#F08C20" stroke="#F08C20" stroke-width="0.6"/>
<path d="M673.2 410.7L680.5 415.8L680.9 424.3L673.6 419.2Z" fill="#F08C20" stroke="#F08C20" stroke-width="0.6"/>
<path d="M673.6 419.2L680.9 424.3L681.3 432.8L674.1 427.7Z" fill="#EA7E1A" stroke="#EA7E1A" stroke-width="0.6"/>
<path d="M674.1 427.7L681.3 432.8L681.7 441.4L674.5 436.1Z" fill="#EA7E1A" stroke="#EA7E1A" stroke-width="0.6"/>
<path d="M674.5 436.1L681.7 441.4L682.1 449.9L675.0 444.6Z" fill="#EA7E1A" stroke="#EA7E1A" stroke-width="0.6"/>
<path d="M675.0 444.6L682.1 449.9L682.5 458.4L675.4 453.1Z" fill="#EA7E1A" stroke="#EA7E1A" stroke-width="0.6"/>
<path d="M592.9 302.2L604.6 400.3M600.6 307.1L611.7 405.6M608.4 312.0L618.8 410.9M616.1 316.9L625.8 416.1M623.8 321.8L632.9 421.4M631.5 326.8L640.0 426.7M639.2 331.7L647.1 432.0M646.9 336.6L654.2 437.3M654.6 341.5L661.2 442.5M662.4 346.4L668.3 447.8M670.1 351.3L675.4 453.1M586.2 305.4L678.2 364.7M587.2 313.6L678.6 373.2M588.3 321.7L679.0 381.8M589.3 329.9L679.4 390.3M590.3 338.0L679.8 398.8M591.4 346.1L680.1 407.3M592.4 354.3L680.5 415.8M593.4 362.4L680.9 424.3M594.4 370.6L681.3 432.8M595.5 378.7L681.7 441.4M596.5 386.9L682.1 449.9" stroke="#1E0E00" stroke-width="1.0" fill="none"/>
<path d="M585.2 297.3L677.8 356.2L682.5 458.4L597.5 395.0Z" stroke="#140900" stroke-width="1.3" fill="none" stroke-linejoin="round"/>
<path d="M340.0 542.7H352.0M344.0 542.7L349.0 537.7H353.0M343.4 552.0H355.4M347.4 552.0L352.4 547.0H356.4M349.3 560.6H361.3M353.3 560.6L358.3 555.6H362.3M354.5 568.3H366.5M358.5 568.3L363.5 563.3H367.5M360.4 576.0H372.4M364.4 576.0L369.4 571.0H373.4M366.4 583.6H378.4M370.4 583.6L375.4 578.6H379.4M371.5 592.1H383.5M375.5 592.1L380.5 587.1H384.5M377.5 599.8H389.5M381.5 599.8L386.5 594.8H390.5M383.5 608.3H395.5M387.5 608.3L392.5 603.3H396.5M389.4 617.7H401.4M393.4 617.7L398.4 612.7H402.4M396.2 626.2H408.2M400.2 626.2L405.2 621.2H409.2M402.2 635.6H414.2M406.2 635.6L411.2 630.6H415.2M409.0 644.1H421.0M413.0 644.1L418.0 639.1H422.0M416.7 654.4H428.7M420.7 654.4L425.7 649.4H429.7M420 638V655M412 644H428" stroke="#2AD82A" stroke-width="1.5" fill="none"/>
<path d="M300.5 433.5L309.5 451.5L322.5 480.0L335.5 508.0L345.5 537.0L360.0 561.0L412.0 622.0L387.4 560.0L379.8 534.6L374.0 525.0L347.3 496.4L318.6 456.3Z" fill="#C97A35"/>
<clipPath id="slv"><path d="M300.5 433.5L309.5 451.5L322.5 480.0L335.5 508.0L345.5 537.0L360.0 561.0L412.0 622.0L387.4 560.0L379.8 534.6L374.0 525.0L347.3 496.4L318.6 456.3Z"/></clipPath>
<path d="M311.17 450.78L312.12 452.35M313.20 450.78L314.35 452.35M312.12 452.35L313.05 453.92M314.35 452.35L315.49 453.92M313.05 453.92L313.98 455.49M315.49 453.92L316.63 455.49M313.98 455.49L314.88 457.06M316.63 455.49L317.72 457.06M314.88 457.06L315.76 458.63M317.72 457.06L318.77 458.63M315.76 458.63L316.64 460.20M318.77 458.63L319.81 460.20M316.64 460.20L317.52 461.77M319.81 460.20L320.85 461.77M317.52 461.77L318.40 463.35M320.85 461.77L321.89 463.35M318.40 463.35L319.28 464.92M321.89 463.35L322.94 464.92M319.28 464.92L320.16 466.49M322.94 464.92L323.98 466.49M320.16 466.49L321.04 468.06M323.98 466.49L325.02 468.06M319.05 468.06L319.84 469.63M321.04 468.06L321.92 469.63M323.03 468.06L323.99 469.63M325.02 468.06L326.07 469.63M319.84 469.63L320.64 471.20M321.92 469.63L322.80 471.20M323.99 469.63L324.95 471.20M326.07 469.63L327.11 471.20M320.64 471.20L321.44 472.77M322.80 471.20L323.68 472.77M324.95 471.20L325.91 472.77M327.11 471.20L328.15 472.77M321.44 472.77L322.24 474.34M323.68 472.77L324.56 474.34M325.91 472.77L326.88 474.34M328.15 472.77L329.19 474.34M322.24 474.34L323.04 475.91M324.56 474.34L325.44 475.91M326.88 474.34L327.84 475.91M329.19 474.34L330.24 475.91M323.04 475.91L323.83 477.48M325.44 475.91L326.32 477.48M327.84 475.91L328.80 477.48M330.24 475.91L331.28 477.48M323.83 477.48L324.63 479.05M326.32 477.48L327.20 479.05M328.80 477.48L329.76 479.05M331.28 477.48L332.32 479.05M324.63 479.05L325.43 480.62M327.20 479.05L328.08 480.62M329.76 479.05L330.72 480.62M332.32 479.05L333.37 480.62M325.43 480.62L326.24 482.20M328.08 480.62L328.97 482.20M330.72 480.62L331.69 482.20M333.37 480.62L334.41 482.20M326.24 482.20L327.05 483.77M328.97 482.20L329.85 483.77M331.69 482.20L332.65 483.77M334.41 482.20L335.46 483.77M327.05 483.77L327.86 485.34M329.85 483.77L330.74 485.34M332.65 483.77L333.62 485.34M335.46 483.77L336.50 485.34M327.86 485.34L328.67 486.91M330.74 485.34L331.63 486.91M333.62 485.34L334.59 486.91M336.50 485.34L337.55 486.91M328.67 486.91L329.48 488.48M331.63 486.91L332.51 488.48M334.59 486.91L335.55 488.48M337.55 486.91L338.59 488.48M329.48 488.48L330.28 490.05M332.51 488.48L333.40 490.05M335.55 488.48L336.52 490.05M338.59 488.48L339.64 490.05M330.28 490.05L331.09 491.62M333.40 490.05L334.29 491.62M336.52 490.05L337.49 491.62M339.64 490.05L340.68 491.62M331.09 491.62L331.90 493.19M334.29 491.62L335.18 493.19M337.49 491.62L338.45 493.19M340.68 491.62L341.73 493.19M331.90 493.19L332.71 494.76M335.18 493.19L336.06 494.76M338.45 493.19L339.42 494.76M341.73 493.19L342.77 494.76M332.71 494.76L333.52 496.33M336.06 494.76L336.95 496.33M339.42 494.76L340.38 496.33M342.77 494.76L343.82 496.33M333.52 496.33L334.39 497.90M336.95 496.33L337.97 497.90M340.38 496.33L341.55 497.90M343.82 496.33L345.13 497.90M334.39 497.90L335.27 499.48M337.97 497.90L338.99 499.48M341.55 497.90L342.72 499.48M345.13 497.90L346.44 499.48M335.27 499.48L336.14 501.05M338.99 499.48L340.02 501.05M342.72 499.48L343.89 501.05M346.44 499.48L347.76 501.05M336.14 501.05L337.02 502.62M340.02 501.05L341.04 502.62M343.89 501.05L345.06 502.62M347.76 501.05L349.08 502.62M335.01 502.62L335.81 504.19M337.02 502.62L337.90 504.19M339.03 502.62L339.98 504.19M341.04 502.62L342.07 504.19M343.05 502.62L344.15 504.19M345.06 502.62L346.23 504.19M347.07 502.62L348.32 504.19M349.08 502.62L350.40 504.19M351.09 502.62L352.49 504.19M335.81 504.19L336.62 505.76M337.90 504.19L338.77 505.76M339.98 504.19L340.93 505.76M342.07 504.19L343.09 505.76M344.15 504.19L345.25 505.76M346.23 504.19L347.41 505.76M348.32 504.19L349.56 505.76M350.40 504.19L351.72 505.76M352.49 504.19L353.88 505.76M336.62 505.76L337.42 507.33M338.77 505.76L339.65 507.33M340.93 505.76L341.88 507.33M343.09 505.76L344.11 507.33M345.25 505.76L346.35 507.33M347.41 505.76L348.58 507.33M349.56 505.76L350.81 507.33M351.72 505.76L353.04 507.33M353.88 505.76L355.27 507.33M337.42 507.33L338.13 508.90M339.65 507.33L340.44 508.90M341.88 507.33L342.76 508.90M344.11 507.33L345.07 508.90M346.35 507.33L347.39 508.90M348.58 507.33L349.71 508.90M350.81 507.33L352.02 508.90M353.04 507.33L354.34 508.90M355.27 507.33L356.65 508.90M338.13 508.90L338.76 510.47M340.44 508.90L341.17 510.47M342.76 508.90L343.58 510.47M345.07 508.90L345.99 510.47M347.39 508.90L348.39 510.47M349.71 508.90L350.80 510.47M352.02 508.90L353.21 510.47M354.34 508.90L355.62 510.47M356.65 508.90L358.03 510.47M338.76 510.47L339.39 512.04M341.17 510.47L341.90 512.04M343.58 510.47L344.40 512.04M345.99 510.47L346.90 512.04M348.39 510.47L349.40 512.04M350.80 510.47L351.90 512.04M353.21 510.47L354.40 512.04M355.62 510.47L356.90 512.04M358.03 510.47L359.40 512.04M339.39 512.04L340.03 513.61M341.90 512.04L342.62 513.61M344.40 512.04L345.22 513.61M346.90 512.04L347.81 513.61M349.40 512.04L350.40 513.61M351.90 512.04L353.00 513.61M354.40 512.04L355.59 513.61M356.90 512.04L358.18 513.61M359.40 512.04L360.78 513.61M340.03 513.61L340.66 515.18M342.62 513.61L343.35 515.18M345.22 513.61L346.03 515.18M347.81 513.61L348.72 515.18M350.40 513.61L351.41 515.18M353.00 513.61L354.09 515.18M355.59 513.61L356.78 515.18M358.18 513.61L359.46 515.18M360.78 513.61L362.15 515.18M340.66 515.18L341.30 516.75M343.35 515.18L344.08 516.75M346.03 515.18L346.85 516.75M348.72 515.18L349.63 516.75M351.41 515.18L352.41 516.75M354.09 515.18L355.19 516.75M356.78 515.18L357.97 516.75M359.46 515.18L360.75 516.75M362.15 515.18L363.52 516.75M341.30 516.75L341.93 518.33M344.08 516.75L344.80 518.33M346.85 516.75L347.67 518.33M349.63 516.75L350.54 518.33M352.41 516.75L353.41 518.33M355.19 516.75L356.29 518.33M357.97 516.75L359.16 518.33M360.75 516.75L362.03 518.33M363.52 516.75L364.90 518.33M341.93 518.33L342.57 519.90M344.80 518.33L345.53 519.90M347.67 518.33L348.49 519.90M350.54 518.33L351.46 519.90M353.41 518.33L354.42 519.90M356.29 518.33L357.38 519.90M359.16 518.33L360.35 519.90M362.03 518.33L363.31 519.90M364.90 518.33L366.27 519.90M342.57 519.90L343.20 521.47M345.53 519.90L346.26 521.47M348.49 519.90L349.31 521.47M351.46 519.90L352.37 521.47M354.42 519.90L355.42 521.47M357.38 519.90L358.48 521.47M360.35 519.90L361.53 521.47M363.31 519.90L364.59 521.47M366.27 519.90L367.65 521.47M343.20 521.47L343.83 523.04M346.26 521.47L346.98 523.04M349.31 521.47L350.13 523.04M352.37 521.47L353.28 523.04M355.42 521.47L356.43 523.04M358.48 521.47L359.57 523.04M361.53 521.47L362.72 523.04M364.59 521.47L365.87 523.04M367.65 521.47L369.02 523.04M343.83 523.04L344.47 524.61M346.98 523.04L347.71 524.61M350.13 523.04L350.95 524.61M353.28 523.04L354.19 524.61M356.43 523.04L357.43 524.61M359.57 523.04L360.67 524.61M362.72 523.04L363.91 524.61M365.87 523.04L367.15 524.61M369.02 523.04L370.39 524.61M344.47 524.61L345.06 526.18M347.71 524.61L348.36 526.18M350.95 524.61L351.65 526.18M354.19 524.61L354.95 526.18M357.43 524.61L358.24 526.18M360.67 524.61L361.53 526.18M363.91 524.61L364.83 526.18M367.15 524.61L368.12 526.18M370.39 524.61L371.42 526.18M345.06 526.18L345.65 527.75M348.36 526.18L348.98 527.75M351.65 526.18L352.32 527.75M354.95 526.18L355.65 527.75M358.24 526.18L358.99 527.75M361.53 526.18L362.32 527.75M364.83 526.18L365.66 527.75M368.12 526.18L368.99 527.75M371.42 526.18L372.33 527.75M345.65 527.75L346.23 529.32M348.98 527.75L349.60 529.32M352.32 527.75L352.98 529.32M355.65 527.75L356.36 529.32M358.99 527.75L359.73 529.32M362.32 527.75L363.11 529.32M365.66 527.75L366.48 529.32M368.99 527.75L369.86 529.32M372.33 527.75L373.23 529.32M346.23 529.32L346.81 530.89M349.60 529.32L350.23 530.89M352.98 529.32L353.64 530.89M356.36 529.32L357.06 530.89M359.73 529.32L360.48 530.89M363.11 529.32L363.89 530.89M366.48 529.32L367.31 530.89M369.86 529.32L370.73 530.89M373.23 529.32L374.14 530.89M346.81 530.89L347.39 532.46M350.23 530.89L350.85 532.46M353.64 530.89L354.31 532.46M357.06 530.89L357.76 532.46M360.48 530.89L361.22 532.46M363.89 530.89L364.68 532.46M367.31 530.89L368.14 532.46M370.73 530.89L371.59 532.46M374.14 530.89L375.05 532.46M347.39 532.46L347.98 534.03M350.85 532.46L351.47 534.03M354.31 532.46L354.97 534.03M357.76 532.46L358.47 534.03M361.22 532.46L361.97 534.03M364.68 532.46L365.47 534.03M368.14 532.46L368.96 534.03M371.59 532.46L372.46 534.03M375.05 532.46L375.96 534.03M347.98 534.03L348.53 535.60M351.47 534.03L352.04 535.60M354.97 534.03L355.54 535.60M358.47 534.03L359.05 535.60M361.97 534.03L362.56 535.60M365.47 534.03L366.07 535.60M368.96 534.03L369.58 535.60M372.46 534.03L373.08 535.60M375.96 534.03L376.59 535.60M348.53 535.60L349.10 537.17M352.04 535.60L352.60 537.17M355.54 535.60L356.10 537.17M359.05 535.60L359.59 537.17M362.56 535.60L363.09 537.17M366.07 535.60L366.58 537.17M369.58 535.60L370.08 537.17M373.08 535.60L373.58 537.17M376.59 535.60L377.07 537.17M349.10 537.17L350.00 538.75M352.60 537.17L353.45 538.75M356.10 537.17L356.90 538.75M359.59 537.17L360.35 538.75M363.09 537.17L363.80 538.75M366.58 537.17L367.25 538.75M370.08 537.17L370.69 538.75M373.58 537.17L374.14 538.75M377.07 537.17L377.59 538.75M350.00 538.75L350.90 540.32M353.45 538.75L354.31 540.32M356.90 538.75L357.71 540.32M360.35 538.75L361.11 540.32M363.80 538.75L364.51 540.32M367.25 538.75L367.91 540.32M370.69 538.75L371.31 540.32M374.14 538.75L374.71 540.32M377.59 538.75L378.11 540.32M350.90 540.32L351.81 541.89M354.31 540.32L355.16 541.89M357.71 540.32L358.51 541.89M361.11 540.32L361.86 541.89M364.51 540.32L365.22 541.89M367.91 540.32L368.57 541.89M371.31 540.32L371.92 541.89M374.71 540.32L375.27 541.89M378.11 540.32L378.63 541.89M351.81 541.89L352.71 543.46M355.16 541.89L356.01 543.46M358.51 541.89L359.32 543.46M361.86 541.89L362.62 543.46M365.22 541.89L365.93 543.46M368.57 541.89L369.23 543.46M371.92 541.89L372.54 543.46M375.27 541.89L375.84 543.46M378.63 541.89L379.15 543.46M352.71 543.46L353.61 545.03M356.01 543.46L356.86 545.03M359.32 543.46L360.12 545.03M362.62 543.46L363.38 545.03M365.93 543.46L366.64 545.03M369.23 543.46L369.89 545.03M372.54 543.46L373.15 545.03M375.84 543.46L376.41 545.03M379.15 543.46L379.66 545.03M353.61 545.03L354.51 546.60M356.86 545.03L357.72 546.60M360.12 545.03L360.93 546.60M363.38 545.03L364.14 546.60M366.64 545.03L367.35 546.60M369.89 545.03L370.55 546.60M373.15 545.03L373.76 546.60M376.41 545.03L376.97 546.60M379.66 545.03L380.18 546.60M354.51 546.60L355.41 548.17M357.72 546.60L358.57 548.17M360.93 546.60L361.73 548.17M364.14 546.60L364.89 548.17M367.35 546.60L368.05 548.17M370.55 546.60L371.22 548.17M373.76 546.60L374.38 548.17M376.97 546.60L377.54 548.17M380.18 546.60L380.70 548.17M355.41 548.17L356.31 549.74M358.57 548.17L359.42 549.74M361.73 548.17L362.54 549.74M364.89 548.17L365.65 549.74M368.05 548.17L368.76 549.74M371.22 548.17L371.88 549.74M374.38 548.17L374.99 549.74M377.54 548.17L378.10 549.74M380.70 548.17L381.22 549.74M356.31 549.74L357.21 551.31M359.42 549.74L360.28 551.31M362.54 549.74L363.34 551.31M365.65 549.74L366.41 551.31M368.76 549.74L369.47 551.31M371.88 549.74L372.54 551.31M374.99 549.74L375.60 551.31M378.10 549.74L378.67 551.31M381.22 549.74L381.74 551.31M357.21 551.31L358.11 552.88M360.28 551.31L361.13 552.88M363.34 551.31L364.15 552.88M366.41 551.31L367.17 552.88M369.47 551.31L370.18 552.88M372.54 551.31L373.20 552.88M375.60 551.31L376.22 552.88M378.67 551.31L379.24 552.88M381.74 551.31L382.25 552.88M358.11 552.88L359.01 554.45M361.13 552.88L361.98 554.45M364.15 552.88L364.95 554.45M367.17 552.88L367.92 554.45M370.18 552.88L370.89 554.45M373.20 552.88L373.86 554.45M376.22 552.88L376.83 554.45M379.24 552.88L379.80 554.45M382.25 552.88L382.77 554.45M359.01 554.45L359.92 556.02M361.98 554.45L362.84 556.02M364.95 554.45L365.76 556.02M367.92 554.45L368.68 556.02M370.89 554.45L371.60 556.02M373.86 554.45L374.52 556.02M376.83 554.45L377.45 556.02M379.80 554.45L380.37 556.02M382.77 554.45L383.29 556.02M359.92 556.02L360.82 557.60M362.84 556.02L363.69 557.60M365.76 556.02L366.56 557.60M368.68 556.02L369.44 557.60M371.60 556.02L372.31 557.60M374.52 556.02L375.19 557.60M377.45 556.02L378.06 557.60M380.37 556.02L380.93 557.60M383.29 556.02L383.81 557.60M360.82 557.60L361.72 559.17M363.69 557.60L364.54 559.17M366.56 557.60L367.37 559.17M369.44 557.60L370.20 559.17M372.31 557.60L373.02 559.17M375.19 557.60L375.85 559.17M378.06 557.60L378.67 559.17M380.93 557.60L381.50 559.17M383.81 557.60L384.32 559.17M361.72 559.17L362.63 560.74M364.54 559.17L365.41 560.74M367.37 559.17L368.20 560.74M370.20 559.17L370.98 560.74M373.02 559.17L373.77 560.74M375.85 559.17L376.55 560.74M378.67 559.17L379.34 560.74M381.50 559.17L382.12 560.74M384.32 559.17L384.91 560.74M362.63 560.74L363.84 562.31M365.41 560.74L366.56 562.31M368.20 560.74L369.28 562.31M370.98 560.74L372.00 562.31M373.77 560.74L374.72 562.31M376.55 560.74L377.44 562.31M379.34 560.74L380.16 562.31M382.12 560.74L382.88 562.31M384.91 560.74L385.60 562.31M363.84 562.31L365.10 563.88M366.56 562.31L367.75 563.88M369.28 562.31L370.40 563.88M372.00 562.31L373.05 563.88M374.72 562.31L375.70 563.88M377.44 562.31L378.35 563.88M380.16 562.31L380.99 563.88M382.88 562.31L383.64 563.88M385.60 562.31L386.29 563.88M365.10 563.88L366.37 565.45M367.75 563.88L368.95 565.45M370.40 563.88L371.52 565.45M373.05 563.88L374.10 565.45M375.70 563.88L376.68 565.45M378.35 563.88L379.25 565.45M380.99 563.88L381.83 565.45M383.64 563.88L384.41 565.45M386.29 563.88L386.99 565.45M366.37 565.45L367.64 567.02M368.95 565.45L370.14 567.02M371.52 565.45L372.65 567.02M374.10 565.45L375.15 567.02M376.68 565.45L377.66 567.02M379.25 565.45L380.16 567.02M381.83 565.45L382.67 567.02M384.41 565.45L385.18 567.02M386.99 565.45L387.68 567.02M367.64 567.02L368.91 568.59M370.14 567.02L371.34 568.59M372.65 567.02L373.77 568.59M375.15 567.02L376.21 568.59M377.66 567.02L378.64 568.59M380.16 567.02L381.07 568.59M382.67 567.02L383.51 568.59M385.18 567.02L385.94 568.59M387.68 567.02L388.38 568.59M368.91 568.59L370.17 570.16M371.34 568.59L372.53 570.16M373.77 568.59L374.90 570.16M376.21 568.59L377.26 570.16M378.64 568.59L379.62 570.16M381.07 568.59L381.98 570.16M383.51 568.59L384.35 570.16M385.94 568.59L386.71 570.16M388.38 568.59L389.07 570.16M370.17 570.16L371.44 571.73M372.53 570.16L373.73 571.73M374.90 570.16L376.02 571.73M377.26 570.16L378.31 571.73M379.62 570.16L380.60 571.73M381.98 570.16L382.89 571.73M384.35 570.16L385.18 571.73M386.71 570.16L387.47 571.73M389.07 570.16L389.76 571.73M371.44 571.73L372.71 573.30M373.73 571.73L374.93 573.30M376.02 571.73L377.15 573.30M378.31 571.73L379.36 573.30M380.60 571.73L381.58 573.30M382.89 571.73L383.80 573.30M385.18 571.73L386.02 573.30M387.47 571.73L388.24 573.30M389.76 571.73L390.46 573.30M372.71 573.30L373.98 574.88M374.93 573.30L376.12 574.88M377.15 573.30L378.27 574.88M379.36 573.30L380.42 574.88M381.58 573.30L382.56 574.88M383.80 573.30L384.71 574.88M386.02 573.30L386.86 574.88M388.24 573.30L389.01 574.88M390.46 573.30L391.15 574.88M373.98 574.88L375.24 576.45M376.12 574.88L377.32 576.45M378.27 574.88L379.39 576.45M380.42 574.88L381.47 576.45M382.56 574.88L383.55 576.45M384.71 574.88L385.62 576.45M386.86 574.88L387.70 576.45M389.01 574.88L389.77 576.45M391.15 574.88L391.85 576.45M375.24 576.45L376.51 578.02M377.32 576.45L378.51 578.02M379.39 576.45L380.52 578.02M381.47 576.45L382.52 578.02M383.55 576.45L384.53 578.02M385.62 576.45L386.53 578.02M387.70 576.45L388.54 578.02M389.77 576.45L390.54 578.02M391.85 576.45L392.54 578.02M378.51 578.02L379.71 579.59M382.52 578.02L383.58 579.59M386.53 578.02L387.44 579.59M390.54 578.02L391.31 579.59M379.71 579.59L380.91 581.16M383.58 579.59L384.63 581.16M387.44 579.59L388.35 581.16M391.31 579.59L392.07 581.16M380.91 581.16L382.10 582.73M384.63 581.16L385.68 582.73M388.35 581.16L389.26 582.73M392.07 581.16L392.84 582.73M382.10 582.73L383.30 584.30M385.68 582.73L386.73 584.30M389.26 582.73L390.17 584.30M392.84 582.73L393.61 584.30M383.30 584.30L384.49 585.87M386.73 584.30L387.79 585.87M390.17 584.30L391.08 585.87M393.61 584.30L394.37 585.87M384.49 585.87L385.69 587.44M387.79 585.87L388.84 587.44M391.08 585.87L391.99 587.44M394.37 585.87L395.14 587.44M385.69 587.44L386.89 589.01M388.84 587.44L389.89 589.01M391.99 587.44L392.90 589.01M395.14 587.44L395.91 589.01M386.89 589.01L388.08 590.58M389.89 589.01L390.95 590.58M392.90 589.01L393.81 590.58M395.91 589.01L396.67 590.58M388.08 590.58L389.28 592.15M390.95 590.58L392.00 592.15M393.81 590.58L394.72 592.15M396.67 590.58L397.44 592.15M389.28 592.15L390.47 593.73M392.00 592.15L393.05 593.73M394.72 592.15L395.63 593.73M397.44 592.15L398.20 593.73M390.47 593.73L391.67 595.30M393.05 593.73L394.10 595.30M395.63 593.73L396.54 595.30M398.20 593.73L398.97 595.30M391.67 595.30L392.87 596.87M394.10 595.30L395.16 596.87M396.54 595.30L397.45 596.87M398.97 595.30L399.74 596.87M392.87 596.87L394.06 598.44M395.16 596.87L396.21 598.44M397.45 596.87L398.36 598.44M399.74 596.87L400.50 598.44M394.06 598.44L395.26 600.01M396.21 598.44L397.26 600.01M398.36 598.44L399.27 600.01M400.50 598.44L401.27 600.01M397.26 600.01L398.31 601.58M401.27 600.01L402.04 601.58M398.31 601.58L399.37 603.15M402.04 601.58L402.80 603.15M399.37 603.15L400.42 604.72M402.80 603.15L403.57 604.72M400.42 604.72L401.47 606.29M403.57 604.72L404.34 606.29M401.47 606.29L402.53 607.86M404.34 606.29L405.10 607.86M402.53 607.86L403.58 609.43M405.10 607.86L405.87 609.43M403.58 609.43L404.63 611.00M405.87 609.43L406.64 611.00M301.8 443.4L313.3 438.2M306.1 452.0L320.1 445.7M310.0 460.6L326.7 453.1M313.9 469.1L332.8 460.6M317.8 477.7L338.9 468.2M321.8 486.3L345.1 475.8M325.8 494.8L351.2 483.4M329.7 503.4L358.6 490.4M333.4 512.0L366.6 497.0M336.4 520.5L374.6 503.3M339.3 529.1L381.7 510.0M342.3 537.7L386.3 517.8M347.3 546.2L388.9 527.5M352.4 554.8L391.4 537.3M357.9 563.4L394.2 547.0M365.2 571.9L397.6 557.3M372.5 580.5L401.0 567.7M379.8 589.1L404.4 578.0M387.1 597.6L407.8 588.3M394.4 606.2L411.2 598.6M401.7 614.8L414.6 609.0" stroke="#2A1206" stroke-width="1.05" fill="none" clip-path="url(#slv)"/>
<path d="M300.5 433.5L309.5 451.5L322.5 480.0L335.5 508.0L345.5 537.0L360.0 561.0L412.0 622.0L387.4 560.0L379.8 534.6L374.0 525.0L347.3 496.4L318.6 456.3Z" stroke="#1A0A00" stroke-width="1.4" fill="none" stroke-linejoin="round"/>
<path d="M412.6 618.6L423.7 613.4L431.3 628L419.4 638.2Z" fill="#BDBDBD"/>
<path d="M415.5 626L427.5 620.5L431.3 628L419.4 638.2Z" fill="#19E0F0"/>
<path d="M428 625L470 604M463 603L470 604L466 610M402 591L409 608" stroke="#1EC8E8" stroke-width="1.2" fill="none"/>
<path d="M474 594L481 603M481 594L474 603" stroke="#1EC8E8" stroke-width="1.2" fill="none"/>
</svg>
<div class="a" style="left:29px;top:689px;width:89px;height:16px;background:#C600D2"></div>
<div class="a" style="left:118px;top:689px;width:89px;height:16px;background:#E2006C"></div>
<div class="a" style="left:207px;top:689px;width:89px;height:16px;background:#FA0000"></div>
<div class="a" style="left:296px;top:689px;width:89px;height:16px;background:#FF4600"></div>
<div class="a" style="left:385px;top:689px;width:89px;height:16px;background:#FF8000"></div>
<div class="a" style="left:474px;top:689px;width:89px;height:16px;background:#FFA400"></div>
<div class="a" style="left:563px;top:689px;width:88px;height:16px;background:#FFCC00"></div>
<div class="a" style="left:651px;top:689px;width:89px;height:16px;background:#FFFF00"></div>
<div class="a" style="left:740px;top:689px;width:89px;height:16px;background:#7FFF00"></div>
<div class="a" style="left:829px;top:689px;width:89px;height:16px;background:#00E800"></div>
<div class="a" style="left:918px;top:689px;width:89px;height:16px;background:#00FA82"></div>
<div class="a" style="left:1007px;top:689px;width:89px;height:16px;background:#00FAFF"></div>
<div class="a" style="left:1096px;top:689px;width:89px;height:16px;background:#00A8FF"></div>
<div class="a" style="left:1185px;top:689px;width:89px;height:16px;background:#0050FF"></div>
<div class="a" style="left:1274px;top:689px;width:91px;height:16px;background:#0000F0"></div>
<div class="a" style="left:29px;top:689px;width:1336px;height:16px;box-shadow:inset 0 1px 0 rgba(60,0,40,0.25),inset 0 -1px 0 rgba(60,0,40,0.25)"></div>
<div class="t" style="left:88px;width:60px;text-align:center;top:691px;font-size:12px;font-weight:bold;color:#111">-6.8</div>
<div class="t" style="left:177px;width:60px;text-align:center;top:691px;font-size:12px;font-weight:bold;color:#111">-5.1</div>
<div class="t" style="left:266px;width:60px;text-align:center;top:691px;font-size:12px;font-weight:bold;color:#111">-3.4</div>
<div class="t" style="left:355px;width:60px;text-align:center;top:691px;font-size:12px;font-weight:bold;color:#111">-1.7</div>
<div class="t" style="left:444px;width:60px;text-align:center;top:691px;font-size:12px;font-weight:bold;color:#111">0.0</div>
<div class="t" style="left:533px;width:60px;text-align:center;top:691px;font-size:12px;font-weight:bold;color:#111">1.7</div>
<div class="t" style="left:622px;width:60px;text-align:center;top:691px;font-size:12px;font-weight:bold;color:#111">3.4</div>
<div class="t" style="left:711px;width:60px;text-align:center;top:691px;font-size:12px;font-weight:bold;color:#111">5.1</div>
<div class="t" style="left:800px;width:60px;text-align:center;top:691px;font-size:12px;font-weight:bold;color:#111">6.8</div>
<div class="t" style="left:889px;width:60px;text-align:center;top:691px;font-size:12px;font-weight:bold;color:#111">8.5</div>
<div class="t" style="left:978px;width:60px;text-align:center;top:691px;font-size:12px;font-weight:bold;color:#111">10.2</div>
<div class="t" style="left:1067px;width:60px;text-align:center;top:691px;font-size:12px;font-weight:bold;color:#111">11.9</div>
<div class="t" style="left:1156px;width:60px;text-align:center;top:691px;font-size:12px;font-weight:bold;color:#111">13.6</div>
<div class="t" style="left:1245px;width:60px;text-align:center;top:691px;font-size:12px;font-weight:bold;color:#111">15.3</div>
<svg width="1365" height="733" style="left:0;top:0">
<g stroke="#E2E2E2" stroke-width="7" fill="none" stroke-linecap="round">
<path d="M619 684H760"/>
<path d="M627.5 644V683.5M619 660A12.5 12.5 0 0 0 619 685"/>
<circle cx="654" cy="672" r="9"/>
<path d="M683.5 665V683.5M700 665V683.5M712 665V683.5M724 665V683.5"/>
<circle cx="748.5" cy="673" r="10.5"/>
</g>
<g fill="#E2E2E2"><circle cx="649.2" cy="647.8" r="4"/><circle cx="660.5" cy="647.8" r="4"/><circle cx="677.7" cy="658" r="4"/><circle cx="689.5" cy="658" r="4"/></g>
<text x="600" y="706" font-family="Liberation Sans, sans-serif" font-size="23" font-weight="bold" fill="#fff" opacity="0.13" textLength="166" lengthAdjust="spacingAndGlyphs">mostaql.com</text>
</svg>
<div class="a" style="left:0;top:707px;width:1365px;height:21px;background:#C4C4C4"></div>
<div class="t" style="left:12.5px;top:713px;font-size:12px;color:#000;transform:scaleX(0.885);transform-origin:0 0">MIN=-7.822, MAX=16.204, Right Click on any Area Element for detailed diagram</div>
<div class="a" style="left:0;top:728px;width:1365px;height:5px;background:linear-gradient(#3A4250,#1C2330)"></div>
<div class="a" style="left:15px;top:729px;width:23px;height:4px;border-radius:2px 2px 0 0;background:linear-gradient(#B8BEC6,#6A727E)"></div>
<div class="a" style="left:76px;top:729px;width:58px;height:4px;border-radius:2px 2px 0 0;background:linear-gradient(#B8BEC6,#6A727E)"></div>
<div class="a" style="left:324px;top:729px;width:53px;height:4px;border-radius:2px 2px 0 0;background:linear-gradient(#B8BEC6,#6A727E)"></div>
<div class="a" style="left:397px;top:729px;width:41px;height:4px;border-radius:2px 2px 0 0;background:linear-gradient(#B8BEC6,#6A727E)"></div>
<div class="a" style="left:449px;top:729px;width:56px;height:4px;border-radius:2px 2px 0 0;background:linear-gradient(#B8BEC6,#6A727E)"></div>
<div class="a" style="left:572px;top:729px;width:56px;height:4px;border-radius:2px 2px 0 0;background:linear-gradient(#B8BEC6,#6A727E)"></div>
<div class="a" style="left:634px;top:729px;width:57px;height:4px;border-radius:2px 2px 0 0;background:linear-gradient(#B8BEC6,#6A727E)"></div>
<div class="a" style="left:696px;top:729px;width:56px;height:4px;border-radius:2px 2px 0 0;background:linear-gradient(#B8BEC6,#6A727E)"></div>
<div class="a" style="left:758px;top:729px;width:58px;height:4px;border-radius:2px 2px 0 0;background:linear-gradient(#B8BEC6,#6A727E)"></div>
<div class="a" style="left:820px;top:729px;width:57px;height:4px;border-radius:2px 2px 0 0;background:linear-gradient(#B8BEC6,#6A727E)"></div>
<div class="a" style="left:1156px;top:707px;width:23px;height:21px;background:#D4D0C8;border-top:1px solid #fff;border-left:1px solid #fff;border-right:1px solid #404040;border-bottom:1px solid #404040;box-shadow:inset -1px -1px 0 #808080"></div>
<div class="a" style="left:1180px;top:707px;width:23px;height:21px;background:#D4D0C8;border-top:1px solid #fff;border-left:1px solid #fff;border-right:1px solid #404040;border-bottom:1px solid #404040;box-shadow:inset -1px -1px 0 #808080"></div>
<svg width="60" height="22" style="left:1156px;top:707px">
<path d="M4.5 10.5L9.5 5.5V8.5H17.5V12.5H9.5V15.5Z" fill="#40E0E0" stroke="#1A3A3A" stroke-width="1"/>
<path d="M42.5 10.5L37.5 5.5V8.5H29.5V12.5H37.5V15.5Z" fill="#40E0E0" stroke="#1A3A3A" stroke-width="1"/>
</svg>
<div class="a" style="left:1204px;top:707px;width:79px;height:21px;background:#fff;border-top:1px solid #808080;border-left:1px solid #808080;border-right:1px solid #fff;border-bottom:1px solid #fff;box-shadow:inset 1px 1px 0 #404040"></div><div class="t" style="left:1208px;top:712px;font-size:12.5px;color:#000;transform:scaleX(0.9);transform-origin:0 0">GLOBAL</div><div class="a" style="left:1264px;top:709px;width:17px;height:17px;background:#D4D0C8;border-top:1px solid #fff;border-left:1px solid #fff;border-right:1px solid #404040;border-bottom:1px solid #404040;box-shadow:inset -1px -1px 0 #808080"></div><div class="a" style="left:1269px;top:716px;width:0;height:0;border-left:3.5px solid transparent;border-right:3.5px solid transparent;border-top:4px solid #000"></div>
<div class="a" style="left:1285px;top:707px;width:79px;height:21px;background:#fff;border-top:1px solid #808080;border-left:1px solid #808080;border-right:1px solid #fff;border-bottom:1px solid #fff;box-shadow:inset 1px 1px 0 #404040"></div><div class="t" style="left:1289px;top:712px;font-size:12.5px;color:#000;transform:scaleX(0.9);transform-origin:0 0">Tonf, m, C</div><div class="a" style="left:1345px;top:709px;width:17px;height:17px;background:#D4D0C8;border-top:1px solid #fff;border-left:1px solid #fff;border-right:1px solid #404040;border-bottom:1px solid #404040;box-shadow:inset -1px -1px 0 #808080"></div><div class="a" style="left:1350px;top:716px;width:0;height:0;border-left:3.5px solid transparent;border-right:3.5px solid transparent;border-top:4px solid #000"></div>
</body></html>
